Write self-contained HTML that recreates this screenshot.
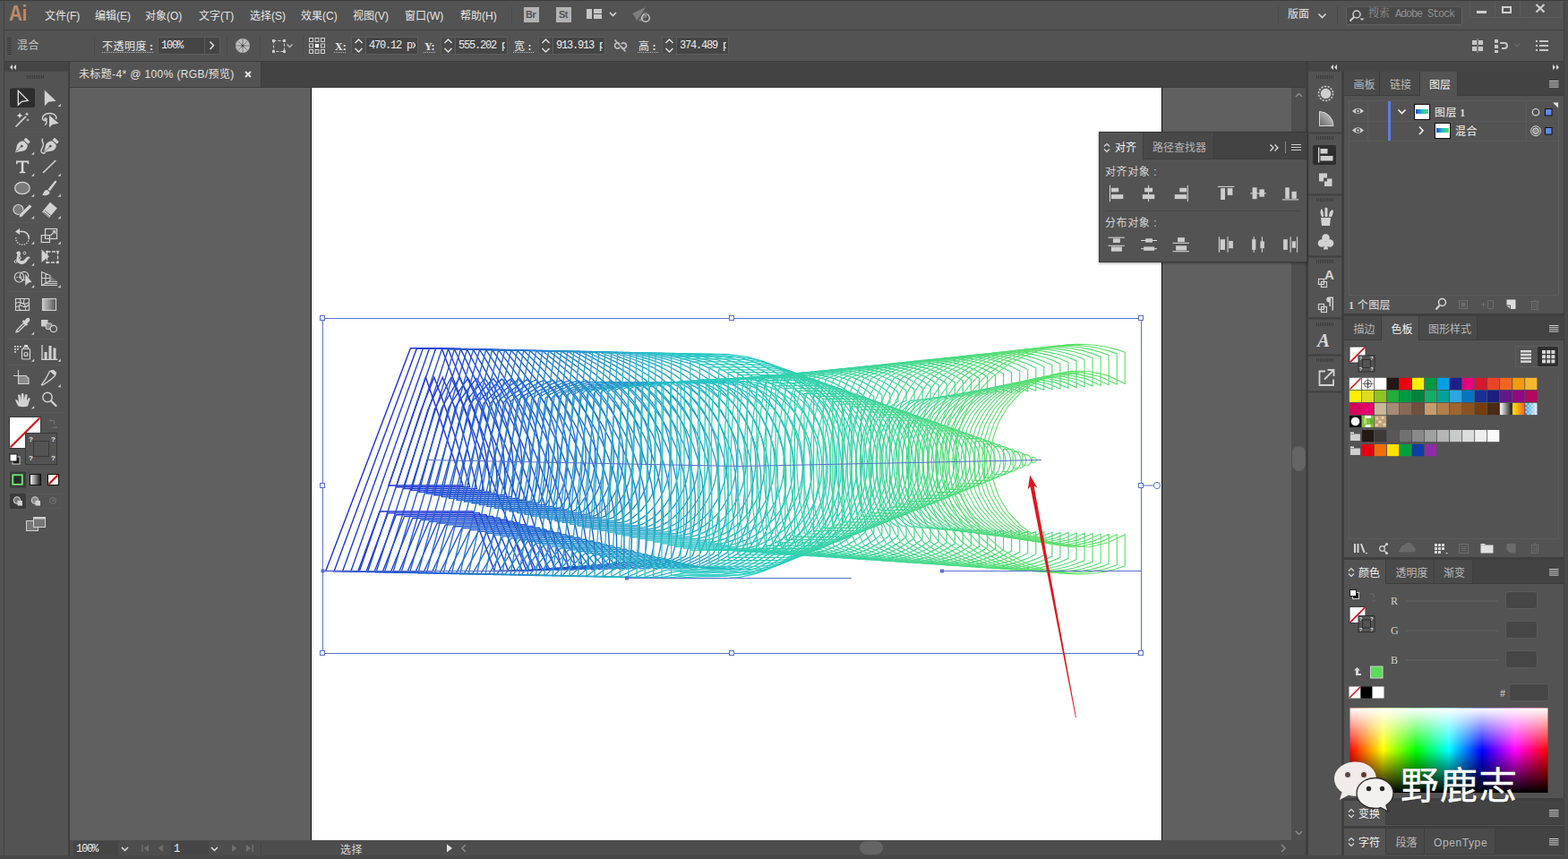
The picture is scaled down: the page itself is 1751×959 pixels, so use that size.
<!DOCTYPE html>
<html lang="zh-CN">
<head>
<meta charset="utf-8">
<title>未标题-4* @ 100% (RGB/预览)</title>
<style>
*{box-sizing:border-box;margin:0;padding:0}
html,body{width:1751px;height:959px;overflow:hidden;background:#535353}
body{position:relative;font-family:"Liberation Sans","Noto Sans CJK SC",sans-serif;font-size:12px;color:#dedede;line-height:1}
.a{position:absolute}
.t{position:absolute;white-space:nowrap;line-height:1}
.mono{font-family:"Liberation Mono","Noto Sans CJK SC",monospace}
.dim{color:#a9a9a9}
svg{position:absolute;overflow:visible}
#menubar{left:0;top:0;width:1751px;height:34px;background:#535353;border-top:1px solid #3d3d3d;border-bottom:1px solid #3f3f3f}
#ctrlbar{left:0;top:34px;width:1751px;height:35px;background:#535353;border-bottom:1px solid #3e3e3e}
#tabrow{left:78px;top:69px;width:1380px;height:29px;background:#434343;border-bottom:1px solid #3c3c3c}
#doctab{left:78px;top:69px;width:214px;height:28px;background:#535353;border-right:1px solid #3f3f3f}
#canvas{left:78px;top:98px;width:1364px;height:840px;background:#606060}
#artboard{left:347px;top:98px;width:951px;height:840px;background:#fff;border-left:1px solid #0c0c0c;border-right:1px solid #0c0c0c}
#vscroll{left:1442px;top:98px;width:16px;height:840px;background:#4f4f4f}
#status{left:78px;top:938px;width:1380px;height:17px;background:#4d4d4d}
#tools{left:0;top:69px;width:76px;height:890px;background:#535353}
#toolhead{left:5px;top:69px;width:71px;height:11px;background:#454545}
#tsep{left:76px;top:69px;width:2px;height:890px;background:#3f3f3f}
#ledge{left:0;top:1px;width:5px;height:958px;background:#525252;border-right:1px solid #414141}
#rsep{left:1458px;top:69px;width:3px;height:890px;background:#3f3f3f}
#rhead{left:1461px;top:69px;width:285px;height:11px;background:#454545}
#strip{left:1461px;top:80px;width:37px;height:879px;background:#535353}
#ssep{left:1498px;top:80px;width:3px;height:879px;background:#3f3f3f}
#rpan{left:1501px;top:80px;width:245px;height:879px;background:#535353}
#redge{left:1746px;top:1px;width:5px;height:958px;background:#4a4a4a;border-left:1px solid #3f3f3f}
#bedge{left:0;top:955px;width:1751px;height:4px;background:#484848}
.tabbar{position:absolute;left:1502px;width:244px;background:#434343}
.tab{position:absolute;top:0;height:100%;background:#4a4a4a;border-right:1px solid #3f3f3f;color:#b5b5b5;font-size:12px}
.tab.on{background:#535353;color:#f0f0f0}
</style>
</head>
<body>
<div class="a" id="menubar"></div>
<div class="a" id="ctrlbar"></div>
<div class="a" id="tabrow"></div>
<div class="a" id="doctab"></div>
<div class="a" id="canvas"></div>
<div class="a" id="artboard"></div>
<div class="a" id="vscroll"></div>
<div class="a" id="status"></div>
<div class="a" id="tools"></div>
<div class="a" id="toolhead"></div>
<div class="a" id="tsep"></div>
<div class="a" id="ledge"></div>
<div class="a" id="rsep"></div>
<div class="a" id="rhead"></div>
<div class="a" id="strip"></div>
<div class="a" id="ssep"></div>
<div class="a" id="rpan"></div>
<div class="a" id="redge"></div>
<div class="a" id="bedge"></div>
<!-- ===== menu bar ===== -->
<div class="t" style="left:10px;top:4px;font-size:23px;font-weight:bold;color:#c08a66;letter-spacing:-0.5px;transform:scaleX(.9);transform-origin:0 0">Ai</div>
<div class="t mi" style="left:50px">文件(F)</div>
<div class="t mi" style="left:106px">编辑(E)</div>
<div class="t mi" style="left:162px">对象(O)</div>
<div class="t mi" style="left:222px">文字(T)</div>
<div class="t mi" style="left:279px">选择(S)</div>
<div class="t mi" style="left:336px">效果(C)</div>
<div class="t mi" style="left:394px">视图(V)</div>
<div class="t mi" style="left:452px">窗口(W)</div>
<div class="t mi" style="left:514px">帮助(H)</div>
<div class="a" style="left:571px;top:7px;width:1px;height:20px;background:#4a4a4a"></div>
<div class="a" style="left:585px;top:8px;width:17px;height:17px;background:#b3b3b3"></div>
<div class="t" style="left:587px;top:11px;font-size:11px;font-weight:bold;color:#535353;letter-spacing:-0.5px">Br</div>
<div class="a" style="left:621px;top:8px;width:17px;height:17px;background:#b3b3b3"></div>
<div class="t" style="left:624px;top:11px;font-size:11px;font-weight:bold;color:#535353;letter-spacing:-0.5px">St</div>
<svg style="left:655px;top:9px" width="36" height="14"><rect x="0" y="1" width="6" height="11" fill="#c6c6c6"/><rect x="8" y="1" width="9" height="5" fill="#c6c6c6"/><rect x="8" y="7" width="9" height="5" fill="#c6c6c6"/><path d="M26 5l3.5 3.5L33 5" fill="none" stroke="#d6d6d6" stroke-width="1.6"/></svg>
<svg style="left:704px;top:6px" width="26" height="22"><path d="M2 9L17 2l-4 7l-6 8l-2-4zM9 17l7-10l3 1l-6 10z" fill="#7d7d7d"/><circle cx="17" cy="14" r="4.3" fill="none" stroke="#c4c4c4" stroke-width="1.5"/><rect x="16.2" y="7.5" width="1.8" height="6.5" fill="#c4c4c4" stroke="#535353" stroke-width=".8"/></svg>
<div class="a" style="left:1427px;top:7px;width:1px;height:20px;background:#4a4a4a"></div>
<div class="t" style="left:1438px;top:10px;font-size:12px;color:#e4e4e4">版面</div>
<svg style="left:1471px;top:13px" width="12" height="10"><path d="M1.5 2.5L5.5 6.5L9.5 2.5" fill="none" stroke="#d6d6d6" stroke-width="1.6"/></svg>
<div class="a" style="left:1493px;top:7px;width:1px;height:20px;background:#4a4a4a"></div>
<div class="a" style="left:1503px;top:7px;width:130px;height:21px;background:#494949;border:1px solid #606060;border-radius:2px"></div>
<svg style="left:1506px;top:10px" width="18" height="16"><circle cx="9" cy="6" r="4" fill="none" stroke="#cfcfcf" stroke-width="1.5"/><path d="M6 9L1.5 13.5" stroke="#cfcfcf" stroke-width="2"/><path d="M12.5 10.5h5l-2.5 2.5z" fill="#cfcfcf"/></svg>
<div class="t" style="left:1528px;top:10px;font-size:12px;color:#8f8f8f;font-family:'Liberation Mono','Noto Serif CJK SC',monospace;letter-spacing:-1.2px"><span style="letter-spacing:0">搜索</span> Adobe Stock</div>
<div class="a" style="left:1641px;top:1px;width:103px;height:19px;border:1px solid #5c5c5c;border-top:0;border-radius:0 0 3px 3px"></div>
<div class="a" style="left:1669px;top:1px;width:1px;height:18px;background:#5c5c5c"></div>
<div class="a" style="left:1697px;top:1px;width:1px;height:18px;background:#5c5c5c"></div>
<div class="a" style="left:1649px;top:12px;width:11px;height:3px;background:#cfcfcf"></div>
<div class="a" style="left:1677px;top:7px;width:11px;height:8px;border:2px solid #cfcfcf"></div>
<svg style="left:1714px;top:4px" width="12" height="11"><path d="M1.5 1l9 8.5M10.5 1l-9 8.5" stroke="#cfcfcf" stroke-width="2.2" fill="none"/></svg>
<style>.mi{top:12px;font-size:12px;color:#e6e6e6}</style>
<!-- ===== control bar ===== -->
<div class="a" style="left:8px;top:42px;width:5px;height:19px;background:repeating-linear-gradient(180deg,#3c3c3c 0 1px,#535353 1px 2px)"></div>
<div class="t" style="left:19px;top:45px;font-size:12px;color:#c4c4c4;letter-spacing:.5px">混合</div>
<div class="a" style="left:105px;top:40px;width:1px;height:23px;background:#4b4b4b"></div>
<div class="t ser" style="left:114px;top:45px"><b>不透明度</b> :</div>
<div class="a" style="left:114px;top:58px;width:58px;height:1px;background:repeating-linear-gradient(90deg,#b9b9b9 0 1px,transparent 1px 2px)"></div>
<div class="a fld" style="left:176px;top:41px;width:70px"></div>
<div class="t num" style="left:180px;top:45px">100%</div>
<div class="a" style="left:228px;top:42px;width:1px;height:18px;background:#5a5a5a"></div>
<svg style="left:232px;top:45px" width="10" height="12"><path d="M2.5 1.5L6.5 5.8L2.5 10" fill="none" stroke="#e0e0e0" stroke-width="1.5"/></svg>
<div class="a" style="left:253px;top:40px;width:1px;height:23px;background:#4b4b4b"></div>
<svg style="left:262px;top:42px" width="18" height="18"><circle cx="9" cy="9" r="8" fill="#bdbdbd"/><g stroke="#7f7f7f" stroke-width="1"><path d="M9 1v16M1 9h16M3.3 3.3l11.4 11.4M14.7 3.3L3.3 14.7"/></g><circle cx="9" cy="9" r="1.6" fill="#4a4a4a"/></svg>
<div class="a" style="left:290px;top:40px;width:1px;height:23px;background:#4b4b4b"></div>
<svg style="left:302px;top:42px" width="30" height="18"><rect x="3.5" y="3.5" width="12" height="12" fill="none" stroke="#c9c9c9" stroke-width="1.2" stroke-dasharray="3 2"/><g fill="#c9c9c9"><rect x="2" y="2" width="3" height="3"/><rect x="14" y="2" width="3" height="3"/><rect x="2" y="14" width="3" height="3"/><rect x="14" y="14" width="3" height="3"/></g><path d="M18.500 7.500l3 3l3-3" fill="none" stroke="#bdbdbd" stroke-width="1.300"/></svg>
<div class="a" style="left:338px;top:40px;width:1px;height:23px;background:#4b4b4b"></div>
<svg style="left:344px;top:41px" width="20" height="20"><g fill="none" stroke="#d0d0d0" stroke-width="1"><rect x="1.5" y="1.5" width="4" height="4"/><rect x="8" y="1.5" width="4" height="4"/><rect x="14.5" y="1.5" width="4" height="4"/><rect x="1.5" y="8" width="4" height="4"/><rect x="14.5" y="8" width="4" height="4"/><rect x="1.5" y="14.5" width="4" height="4"/><rect x="8" y="14.5" width="4" height="4"/><rect x="14.5" y="14.5" width="4" height="4"/></g><rect x="8" y="8" width="4" height="4" fill="#fff"/></svg>
<div class="t ser" style="left:374px;top:45px">X:</div>
<div class="a dot" style="left:373px;width:13px"></div>
<div class="a spn" style="left:392px"></div>
<svg class="sp" style="left:395px"><use href="#spin"/></svg>
<div class="a fld" style="left:408px;width:59px"></div>
<div class="t num" style="left:412px;top:45px;width:52px;overflow:hidden">470.12 px</div>
<div class="t ser" style="left:474px;top:45px">Y:</div>
<div class="a dot" style="left:473px;width:13px"></div>
<div class="a spn" style="left:492px"></div>
<svg class="sp" style="left:495px"><use href="#spin"/></svg>
<div class="a fld" style="left:508px;width:59px"></div>
<div class="t num" style="left:512px;top:45px;width:52px;overflow:hidden">555.202 px</div>
<div class="t ser" style="left:574px;top:45px"><b>宽</b> :</div>
<div class="a dot" style="left:573px;width:23px"></div>
<div class="a spn" style="left:601px"></div>
<svg class="sp" style="left:604px"><use href="#spin"/></svg>
<div class="a fld" style="left:617px;width:59px"></div>
<div class="t num" style="left:621px;top:45px;width:52px;overflow:hidden">913.913 px</div>
<svg style="left:684px;top:42px" width="18" height="18"><g fill="none" stroke="#bdbdbd" stroke-width="1.8"><path d="M8 7C6 5 2.5 6 2.5 9S6 13 8 11"/><path d="M10 7c2-2 5.500-1 5.500 2S12 13 10 11"/><path d="M2.500 2.500l12 13"/></g></svg>
<div class="t ser" style="left:713px;top:45px"><b>高</b> :</div>
<div class="a dot" style="left:712px;width:23px"></div>
<div class="a spn" style="left:739px"></div>
<svg class="sp" style="left:742px"><use href="#spin"/></svg>
<div class="a fld" style="left:755px;width:59px"></div>
<div class="t num" style="left:759px;top:45px;width:52px;overflow:hidden">374.489 px</div>
<svg width="0" height="0"><defs><g id="spin"><path d="M1.500 6L5.500 2L9.500 6M1.500 12L5.500 16L9.500 12" fill="none" stroke="#e0e0e0" stroke-width="1.5"/></g></defs></svg>
<svg style="left:1643px;top:43px" width="16" height="16"><g fill="#c6c6c6"><rect x="1" y="2" width="5" height="5"/><rect x="8" y="2" width="5" height="5"/><rect x="1" y="9" width="5" height="5"/><rect x="8" y="9" width="5" height="5"/></g><path d="M7 0v16" stroke="#9a9a9a" stroke-width="1"/></svg>
<svg style="left:1668px;top:42px" width="34" height="18"><g fill="#c6c6c6"><rect x="1" y="2" width="4" height="4"/><rect x="1" y="8" width="4" height="4"/><rect x="1" y="14" width="4" height="3"/></g><path d="M7 6h5a3 3 0 0 1 0 6h-3" fill="none" stroke="#c6c6c6" stroke-width="2"/><path d="M23 7l3 3l3-3" fill="none" stroke="#6a6a6a" stroke-width="1.3"/></svg>
<svg style="left:1715px;top:44px" width="16" height="14"><g fill="#c6c6c6"><rect x="0" y="1" width="2" height="2"/><rect x="4" y="1" width="10" height="2"/><rect x="0" y="6" width="2" height="2"/><rect x="4" y="6" width="10" height="2"/><rect x="0" y="11" width="2" height="2"/><rect x="4" y="11" width="10" height="2"/></g></svg>
<style>
.ser{font-family:"Liberation Serif","Noto Sans CJK SC",serif;font-size:12px;color:#e6e6e6;font-weight:bold;margin-top:1px}.ser b{font-weight:400;letter-spacing:.5px}
.num{font-family:"Liberation Mono",monospace;font-size:12px;letter-spacing:-1.2px;color:#f0f0f0}
.fld{top:41px;height:20px;background:#454545;border:1px solid #5e5e5e}
.spn{top:41px;width:16px;height:20px;border:1px solid #5a5a5a;border-right:0;background:#4b4b4b}
.sp{top:42px;width:11px;height:18px}
.dot{top:58px;height:1px;background:repeating-linear-gradient(90deg,#b9b9b9 0 1px,transparent 1px 2px)}
</style>
<!-- ===== document tab ===== -->
<div class="t" style="left:88px;top:77px;font-size:12px;color:#e2e2e2;letter-spacing:.37px">未标题-4* @ 100% (RGB/预览)</div>
<svg style="left:273px;top:79px" width="8" height="8"><path d="M1 1l6 6M7 1L1 7" stroke="#e6e6e6" stroke-width="1.8"/></svg>
<!-- toolbar head -->
<svg style="left:10px;top:71px" width="10" height="8"><path d="M4 1L1 4l3 3zM8 1L5 4l3 3z" fill="#d8d8d8"/></svg>
<div class="a" style="left:30px;top:84px;width:20px;height:4px;background:repeating-linear-gradient(90deg,#3a3a3a 0 1px,#535353 1px 2px)"></div>
<!-- right head -->
<svg style="left:1485px;top:71px" width="10" height="8"><path d="M4 1L1 4l3 3zM8 1L5 4l3 3z" fill="#d8d8d8"/></svg>
<svg style="left:1732px;top:71px" width="10" height="8"><path d="M2 1l3 3l-3 3zM6 1l3 3l-3 3z" fill="#d8d8d8"/></svg>
<!-- ===== status bar ===== -->
<div class="a" style="left:82px;top:939px;width:50px;height:16px;background:#454545"></div>
<div class="t num" style="left:85px;top:942px;font-size:12px">100%</div>
<svg style="left:134px;top:943px" width="12" height="10"><path d="M2 3l3.500 3.500L9 3" fill="none" stroke="#e0e0e0" stroke-width="1.5"/></svg>
<svg style="left:156px;top:941px" width="30" height="12"><g fill="#6e6e6e"><rect x="2" y="2" width="1.500" height="8"/><path d="M10 2v8L4.500 6z"/><path d="M26 2v8l-5.500-4z"/></g></svg>
<div class="a" style="left:191px;top:939px;width:42px;height:16px;background:#454545"></div>
<div class="t num" style="left:194px;top:942px;font-size:12px">1</div>
<svg style="left:234px;top:943px" width="12" height="10"><path d="M2 3l3.500 3.500L9 3" fill="none" stroke="#e0e0e0" stroke-width="1.500"/></svg>
<svg style="left:256px;top:941px" width="30" height="12"><g fill="#6e6e6e"><path d="M3 2v8l5.500-4z"/><path d="M19 2v8l5.500-4z"/><rect x="25.500" y="2" width="1.500" height="8"/></g></svg>
<div class="a" style="left:291px;top:940px;width:1px;height:14px;background:#444"></div><div class="t" style="left:380px;top:943px;font-size:12px;color:#d6d6d6;letter-spacing:.5px">选择</div>
<svg style="left:497px;top:941px" width="10" height="12"><path d="M2 1.500v9L8 6z" fill="#e0e0e0"/></svg>
<svg style="left:513px;top:941px" width="10" height="12"><path d="M7 2L3 6l4 4" fill="none" stroke="#8a8a8a" stroke-width="1.500"/></svg>
<div class="a" style="left:960px;top:939px;width:26px;height:15px;border-radius:8px;background:#646464"></div>
<svg style="left:1428px;top:941px" width="10" height="12"><path d="M3 2l4 4l-4 4" fill="none" stroke="#8a8a8a" stroke-width="1.500"/></svg>
<!-- vertical scrollbar -->
<svg style="left:1445px;top:101px" width="12" height="10"><path d="M2 7l3.500-3.500L9 7" fill="none" stroke="#8a8a8a" stroke-width="1.500"/></svg>
<svg style="left:1445px;top:925px" width="12" height="10"><path d="M2 3l3.500 3.500L9 3" fill="none" stroke="#8a8a8a" stroke-width="1.500"/></svg>
<div class="a" style="left:1443px;top:498px;width:15px;height:28px;border-radius:8px;background:#646464"></div>
<!-- ===== tools panel ===== -->
<svg style="left:0;top:0" width="80" height="620" viewBox="0 0 80 620">
<defs>
<path id="ct" d="M0 3.200L3.200 0V3.200z" fill="#cfcfcf"/>
<linearGradient id="gtool" x1="0" x2="1" y1="0" y2="0"><stop offset="0" stop-color="#c9c9c9"/><stop offset="1" stop-color="#555"/></linearGradient>
<linearGradient id="gbw" x1="0" x2="1" y1="0" y2="0"><stop offset="0" stop-color="#fff"/><stop offset="1" stop-color="#111"/></linearGradient>
</defs>
<g fill="none" stroke="#5d5d5d" stroke-width="1" opacity=".55">
<path d="M8 147.500h64M8 248.500h64M8 325.500h64M8 378.500h64M8 407.500h64M8 460.500h64"/>
</g>
<!-- row1 -->
<rect x="11" y="98.500" width="28" height="21.500" rx="2" fill="#2d2d2d"/>
<path d="M20.300 101.400V117.300L24.400 113.300L31.300 112.300z" fill="none" stroke="#e8e8e8" stroke-width="1.300" stroke-linejoin="miter"/>
<path d="M49.800 100.800V118.300L54.200 113.800L62.600 112.700z" fill="#d2d2d2"/>
<use href="#ct" x="64.600" y="115.800"/>
<!-- row2 wand / lasso -->
<path d="M17.500 141.500L29 129.800" stroke="#d2d2d2" stroke-width="1.700"/>
<path d="M22 125.500l.9 2.600l2.600.9l-2.600.9l-.9 2.600l-.9-2.600l-2.600-.9l2.600-.9zM30 125l.6 1.700l1.700.6l-1.700.6l-.6 1.700l-.6-1.700l-1.700-.6l1.700-.6zM31 132l.5 1.400l1.400.5l-1.400.5l-.5 1.400l-.5-1.400l-1.400-.5l1.400-.5z" fill="#e0e0e0"/>
<path d="M62.500 133c1.500-3.500-2-6.500-7-6.500c-5 0-8.500 3-8 6c.4 2 2.500 2.500 4 1.500c1-.8.500-2.200-.8-2c-1.200.3-.8 2 .6 2.600c1.600 1 .8 3.500-1.300 5" fill="none" stroke="#d2d2d2" stroke-width="1.400"/>
<path d="M55 128.500V142.500L58.500 139L65.500 137.800z" fill="#d2d2d2"/>
<!-- row3 pen / curvature -->
<g id="pen" fill="#d2d2d2"><path d="M17 170.300L19.300 161.200Q22.500 156.800 26.800 157.700L30.600 161.400Q31.500 165.500 27 168.300zM17.600 169.600L23.500 163.800"/><path d="M26.500 156.200L29 153.700L33.700 158.300L31.500 160.700z"/><circle cx="24.200" cy="163.200" r="1.400" fill="#535353"/><path d="M17.400 169.900L23.400 164" stroke="#535353" stroke-width=".8"/></g>
<use href="#ct" x="35" y="169.500"/>
<use href="#pen" x="32" y="0"/>
<path d="M47.500 154.500c-1.500 2.500.5 4.500 1 6.500c.6 2.500-2.500 4.500-2.500 7.500c0 2.500 2.500 3 4.500 2" fill="none" stroke="#d2d2d2" stroke-width="1.400"/>
<!-- row4 T / line -->
<path d="M18 179.500h14.200v3.700h-1.300l-.6-2h-4v10.200l2 .5v1.300h-6.500v-1.300l2-.5v-10.200h-4l-.6 2H18z" fill="#d8d8d8"/>
<use href="#ct" x="35" y="193.500"/>
<path d="M48 193L62.300 179" stroke="#d2d2d2" stroke-width="1.600"/>
<use href="#ct" x="64.600" y="193.500"/>
<!-- row5 ellipse / brush -->
<ellipse cx="24.900" cy="210" rx="8.300" ry="6.600" fill="#7c7c7c" stroke="#d8d8d8" stroke-width="1.200"/>
<use href="#ct" x="35" y="216.500"/>
<path d="M53.500 211.500L61.500 201.800Q63.200 201.200 63.200 203L55.800 213.300z" fill="#d2d2d2"/>
<path d="M47 217.500q1.500-1 2-3q1.500-3 4-2.300l2.300 2q.5 2.300-2.300 3.500q-3 1-6-.2z" fill="#d2d2d2"/>
<use href="#ct" x="64.600" y="216.500"/>
<!-- row6 shaper / eraser -->
<circle cx="20.500" cy="234" r="5.500" fill="#7c7c7c" stroke="#d8d8d8" stroke-width="1.200"/>
<path d="M21.500 239.500L33 228l2.700 2.700L24.200 242.200L21.300 242.700z" fill="#d2d2d2" stroke="#535353" stroke-width=".6"/>
<use href="#ct" x="35" y="241"/>
<path d="M47 236.500L56 225.800L63.800 232.500L54.800 243.200z" fill="#d2d2d2"/>
<path d="M48.500 236.800L55.300 242.400M50 235L56.800 240.600" stroke="#535353" stroke-width=".9"/>
<use href="#ct" x="64.600" y="241"/>
<!-- row7 rotate / scale -->
<path d="M19.500 258.500H25a7.300 7.300 0 0 1 7.300 7.300" fill="none" stroke="#d2d2d2" stroke-width="1.500"/>
<path d="M32.300 265.800a7.300 7.300 0 1 1-14.500-1" fill="none" stroke="#d2d2d2" stroke-width="1.500" stroke-dasharray="1.300 1.500"/>
<path d="M17 258.500L22 255v7z" fill="#d2d2d2"/>
<use href="#ct" x="35" y="269.500"/>
<g fill="none" stroke="#d2d2d2" stroke-width="1.200"><rect x="50.500" y="255.500" width="13" height="11"/><rect x="46.200" y="262.700" width="9.300" height="7.800"/><path d="M56.500 263l5-5M58.500 257.800h3.200v3.200"/></g>
<use href="#ct" x="64.600" y="269.500"/>
<!-- row8 warp / free transform -->
<path d="M18 282.500c2-3 5-2.500 5 .5c0 2.500-2.500 4.500-1 7c1.500 2.500 5 1 6.500-1.500c1.500-2.500 4.500-3 5.500 0c-1.500-.5-2.500.5-3.500 2.500c-1.500 3-5 5-8.500 3.500c-3.500-1.500-4.500-5-3-8c.6-1.300.5-3-1-4z" fill="#d2d2d2"/>
<g fill="#535353" stroke="#d2d2d2" stroke-width="1"><circle cx="17.500" cy="292" r="1.400"/><circle cx="22" cy="288" r="1.400"/><circle cx="27.500" cy="282.500" r="1.400"/></g>
<use href="#ct" x="35" y="293.500"/>
<path d="M46.500 278.500V293L50.500 289.500L55 286.500z" fill="#d2d2d2"/>
<rect x="52.500" y="281" width="12" height="12" fill="none" stroke="#d2d2d2" stroke-width="1.300" stroke-dasharray="4 1.500"/>
<g fill="#d2d2d2"><rect x="51.300" y="279.800" width="2.400" height="2.400"/><rect x="63.300" y="279.800" width="2.400" height="2.400"/><rect x="51.300" y="291.800" width="2.400" height="2.400"/><rect x="63.300" y="291.800" width="2.400" height="2.400"/></g>
<!-- row9 shape builder / perspective -->
<g fill="none" stroke="#d2d2d2" stroke-width="1.200"><ellipse cx="21.500" cy="309.500" rx="5.200" ry="5.500"/><circle cx="27" cy="308" r="4.700"/></g>
<path d="M18.500 309.500h6" stroke="#d2d2d2" stroke-width="1.300" stroke-dasharray="1.200 1.200"/>
<path d="M28 305.500V319.500L31.500 316L35.800 315z" fill="#d2d2d2" stroke="#535353" stroke-width=".5"/>
<use href="#ct" x="35" y="318"/>
<g fill="none" stroke="#d2d2d2" stroke-width="1.100"><path d="M46.500 303.500V318.500L56 313.500V307.500zM51 305.200V316.200M46.500 310.500H56M46.500 318.500H64M50 316.500H64M54 314.500H64"/></g>
<path d="M56 307.500L64 314.500H56z" fill="#8a8a8a" opacity=".6"/>
<use href="#ct" x="64.600" y="318"/>
<!-- row10 mesh / gradient -->
<g fill="none" stroke="#d2d2d2" stroke-width="1.100"><rect x="17.500" y="333.500" width="15" height="13"/><path d="M17.500 338.500q4-2 7 0t8-1M17.500 343q5-3 8-1t7-2M22 333.500q2 4 0 7t1 6M27.500 333.500q-2 4 0 7t1 6"/></g>
<rect x="47.500" y="333.500" width="15" height="13" fill="url(#gtool)" stroke="#d2d2d2" stroke-width="1.100"/>
<!-- row11 eyedropper / blend -->
<path d="M17 371.500l1-3l9-9.500l3 3l-9.500 9zM27.500 358l2-2.500q2-1.500 3.500.3q1 1.700-.5 3.200l-2.300 2.300l1 1l-1.500 1.500l-5-5l1.500-1.500z" fill="#d2d2d2"/>
<path d="M19.700 369.300l7.300-7.300" stroke="#535353" stroke-width="1.200"/>
<use href="#ct" x="35" y="370.500"/>
<rect x="46" y="357" width="7.500" height="7.500" fill="#cfcfcf"/>
<rect x="51.300" y="361" width="6.500" height="6.500" rx="1.500" fill="#8a8a8a" stroke="#d2d2d2" stroke-width="1"/>
<circle cx="59.800" cy="367" r="3.700" fill="#535353" stroke="#d2d2d2" stroke-width="1.200"/>
<!-- row12 symbol sprayer / graph -->
<g fill="#d2d2d2"><rect x="16" y="386" width="1.800" height="1.800"/><rect x="19" y="386" width="1.800" height="1.800"/><rect x="22" y="386" width="1.800" height="1.800"/><rect x="16" y="389" width="1.800" height="1.800"/><rect x="19" y="389" width="1.800" height="1.800"/><rect x="16" y="392" width="1.800" height="1.800"/><rect x="27" y="385" width="4" height="2.500"/></g>
<rect x="24.500" y="389.500" width="9" height="11.500" rx="1" fill="none" stroke="#d2d2d2" stroke-width="1.200"/>
<path d="M26.500 389.500v-2h5v2" fill="none" stroke="#d2d2d2" stroke-width="1.100"/>
<circle cx="29" cy="395.500" r="2" fill="none" stroke="#d2d2d2" stroke-width="1.200"/>
<use href="#ct" x="35" y="400.500"/>
<g fill="#d2d2d2"><rect x="46.300" y="385" width="1.300" height="17"/><rect x="46.300" y="400.700" width="18" height="1.300"/><rect x="49.500" y="393" width="3" height="8"/><rect x="54.500" y="386" width="3" height="15"/><rect x="59.500" y="388.500" width="3" height="12.500"/></g>
<use href="#ct" x="64.600" y="400.500"/>
<!-- row13 artboard / slice -->
<path d="M15 419.500H22M20.500 413V420" stroke="#d2d2d2" stroke-width="1.100" fill="none"/>
<path d="M20.500 419.500H29L32 422.500V428.500H20.500z" fill="#8a8a8a" stroke="#d2d2d2" stroke-width="1.100"/>
<path d="M46.500 429.500q5-6 9-15l4-1l3 2.500l-1 3.500q-5 5-14 10.500z" fill="none" stroke="#d2d2d2" stroke-width="1.300"/>
<path d="M55.500 414.500l3.500-1.500l3.500 3l-1 3.500z" fill="#d2d2d2"/>
<use href="#ct" x="64.600" y="429"/>
<!-- row14 hand / zoom -->
<path d="M20.500 453.500q-2.500-4-3.500-7q1.500-1 3 1l1 1.500l-1-8q1.500-1.200 2.500 0l1 5.500l.3-7q1.500-1 2.600 0l.4 7l1.300-6q1.500-.8 2.400.3l-.6 7l1.800-3.500q1.500-.5 2 .7q-1.500 4-2.700 8.500q-5 1.500-10.500 0z" fill="#d2d2d2"/>
<use href="#ct" x="35" y="453"/>
<circle cx="53" cy="443.500" r="5.200" fill="none" stroke="#d2d2d2" stroke-width="1.400"/>
<path d="M57 447.500L62.500 453" stroke="#d2d2d2" stroke-width="2.200" stroke-linecap="round"/>
<!-- fill / stroke -->
<rect x="10.500" y="465.500" width="35" height="35" fill="#fff" stroke="#383838" stroke-width="1"/>
<path d="M11.500 499.500L44.500 466.500" stroke="#d51a24" stroke-width="2.300"/>
<rect x="28.500" y="483.500" width="35" height="35" fill="#535353" stroke="#383838" stroke-width="1"/>
<rect x="37.500" y="492.500" width="17" height="17" fill="#535353" stroke="#383838" stroke-width="1"/>
<g fill="none" stroke="#6f6f6f" stroke-width="1.200"><path d="M56 469.500h4.500v4.500M58 477.500h4.500"/><path d="M54.500 469.500l2.500-2v4zM62.500 475.500l-2 2.500h4z" fill="#6f6f6f" stroke="none"/></g>
<rect x="14" y="510" width="8" height="8" fill="#1a1a1a" stroke="#d2d2d2" stroke-width="1"/>
<rect x="11" y="507" width="8" height="8" fill="#fff" stroke="#1a1a1a" stroke-width="1"/>
<!-- colour / gradient / none -->
<rect x="11" y="526.500" width="18" height="18" rx="1.500" fill="#3a3a3a"/>
<rect x="14.300" y="530.300" width="10.500" height="10.500" fill="#2a2a2a" stroke="#6ce56c" stroke-width="1.900"/>
<rect x="33.500" y="529.500" width="12" height="12" fill="url(#gbw)" stroke="#111" stroke-width="1"/>
<rect x="53.500" y="529.500" width="12" height="12" fill="#fff" stroke="#111" stroke-width="1"/>
<path d="M54.500 540.500L64.500 530.500" stroke="#e01218" stroke-width="2.400"/>
<!-- draw modes -->
<rect x="11" y="551" width="18" height="17" rx="1.500" fill="#3a3a3a"/>
<rect x="29.500" y="551.500" width="38" height="16" fill="none" stroke="#5c5c5c" stroke-width="1" opacity=".6"/>
<circle cx="19" cy="558.500" r="3.700" fill="#7a7a7a" stroke="#d2d2d2" stroke-width="1.100"/><rect x="19.500" y="559" width="5.500" height="5.500" fill="#d2d2d2"/>
<circle cx="39" cy="558.500" r="3.700" fill="#8a8a8a" stroke="#d2d2d2" stroke-width="1.100"/><rect x="39.500" y="559" width="5.500" height="5.500" fill="#d2d2d2"/>
<circle cx="59" cy="559" r="3.300" fill="none" stroke="#6b6b6b" stroke-width="1.500"/><circle cx="59.500" cy="558.500" r="1.500" fill="#6b6b6b"/>
<!-- screen mode -->
<rect x="29.500" y="581.500" width="13" height="11" fill="#777" stroke="#d2d2d2" stroke-width="1"/>
<rect x="37.500" y="577.500" width="13" height="11" fill="#777" stroke="#d2d2d2" stroke-width="1"/>
<rect x="37.500" y="577.500" width="13" height="2" fill="#d2d2d2"/>
</svg>
<div class="t q" style="left:32px;top:487px">?</div>
<div class="t q" style="left:57px;top:487px">?</div>
<div class="t q" style="left:32px;top:508px">?</div>
<div class="t q" style="left:57px;top:508px">?</div>
<style>.q{font-size:8px;font-weight:bold;color:#e8e8e8}</style>
<!-- ===== artwork ===== -->
<svg style="left:0;top:0" width="1751" height="959" viewBox="0 0 1751 959"><g fill="none" stroke-width="1.25" stroke-linejoin="miter">
<path stroke="#2232d6" stroke-width="1.42" d="M363.7 637.5l94.7-248.7 34.8 0 94.8 248.7-36 0-24-66.5-104 0-24 66.5-30.2 0zM434 542l41.3-121 41.7 121-71.1 0z"/>
<path stroke="#2237d5" stroke-width="1.42" d="M373.1 637.7l92.3-248.7 34.8 0 25.1 60.8 12.5 30.8 12.2 31.1 11.9 31.3 11.6 31.3 11.3 31.3 10.9 31.2-35.9 .6-24.4-64.6-102.2 .1-24.1 64.8-30 0zM442.4 543.8l27.5-85.1 14.9-37.5 7.7 20.3 7.3 20.6 6.9 20.7 7.9 25.8 10.1 35.2-70.5 0z"/>
<path stroke="#223cd5" stroke-width="1.41" d="M382.5 637.9l89.9-248.8 34.8 0 19.9 44.5 6.7 15 6.5 15.3 6.5 15.3 6.4 15.5 6.2 15.6 6.1 15.7 5.9 15.8 5.8 15.8 5.5 15.8 5.5 15.7 5.2 15.8 5.1 15.6 5 15.6-35.9 1.2-24.7-62.6-100.5 0-24.2 63.2-29.8 0zM450.9 545.6l26.8-87.7 2.2-5.4 14.4-31 4.3 10 4.1 10.3 4 10.4 3.7 10.6 3.5 10.7 3.3 10.7 3 10.6 4.1 15.8 8.2 35-69.9 0z"/>
<path stroke="#2240d4" stroke-width="1.41" d="M391.8 638.1l87.6-248.8 34.8 0 21 43.3 7 14.9 6.9 15 6.7 15.3 6.6 15.5 6.4 15.6 6.1 15.8 6 15.8 5.6 16 5.5 15.9 5.1 15.9 4.9 15.8 4.7 15.7 4.5 15.6-21.5 1.1-14.4 .7-25-60.7-98.8 .1-24.1 61.5-29.6 0zM459.4 547.4l26-90.3 2.5-5.3 13.2-25.3 2.6-4.8 4.7 10 4.5 10.4 4.2 10.6 3.9 10.9 3.6 10.9 3.1 11 2.8 10.9 2.4 10.8 2.2 10.6 5.1 29.6-69.3 0z"/>
<path stroke="#2245d4" stroke-width="1.40" d="M401.2 638.3l85.3-248.9 34.7 0 14.7 28.1 7.4 14.2 7.3 14.6 7.2 14.9 7 15.2 6.8 15.4 6.6 15.7 6.2 15.8 5.9 16 5.6 16 5.3 16.1 4.9 16 4.6 15.9 4.2 15.8 4 15.5-21.4 1.6-14.4 .8-25.3-58.7-97.1 .2-24.2 59.8-29.4 0zM467.8 549.2l25.3-93 2.7-5.2 11.6-19.6 5.8-9.5 2.6 5 2.5 5 2.5 5.2 2.4 5.3 2.2 5.4 2.2 5.4 2.1 5.6 1.9 5.5 1.9 5.6 1.7 5.7 1.6 5.6 1.4 5.6 1.4 5.7 1.2 5.5 1.1 5.6 1.9 10.9 1.5 10.5 2.6 24.2-68.7 0z"/>
<path stroke="#2349d3" stroke-width="1.40" d="M410.6 638.5l82.9-248.9 34.7 0 15.5 27.3 7.7 13.9 7.7 14.3 7.5 14.8 7.3 15.1 7 15.4 6.7 15.7 6.3 15.9 5.9 16.1 5.5 16.1 5.1 16.2 4.6 16.1 4.3 16 3.8 15.9 3.5 15.5-14.1 1.4-14.4 1.1-7.2 .5-25.7-56.7-95.3 .1-24.3 58.2-29.2 0zM476.2 551l24.7-95.6 2.8-5.2 12.7-19 6.3-9.1 2.8 5 2.7 5.1 2.7 5.2 2.5 5.3 2.4 5.5 2.3 5.5 2.1 5.7 2 5.7 1.9 5.7 1.7 5.8 1.6 5.8 1.3 5.8 1.3 5.7 1.1 5.8 .9 5.6 .8 5.6 .7 5.5 1 10.7 .6 10.1 .5 13.8-68 0z"/>
<path stroke="#234dd3" stroke-width="1.39" d="M420 638.7l80.5-249 34.7 0 8.1 13.2 8.1 13.4 8.1 13.6 8 14.1 7.8 14.5 7.6 15 7.2 15.4 6.8 15.8 6.5 16 5.9 16.1 5.4 16.3 4.9 16.3 4.4 16.3 3.9 16.1 3.4 15.8 3.1 15.6-14.2 1.6-14.3 1.4-7.2 .6-26.1-54.8-93.5 .2-24.3 56.5-29 0zM484.7 552.8l23.9-98.2 3.1-5.1 13.6-18.5 3.5-4.4 3.4-4.2 3 4.9 2.9 5.1 2.8 5.2 2.7 5.4 2.6 5.6 2.4 5.6 2.2 5.8 2.1 5.8 1.8 5.9 1.7 5.9 1.5 6 1.4 5.9 1.1 5.9 1 5.9 .8 5.8 .6 5.7 .4 5.6 .3 5.4 .2 5.3 .1 10.2-.4 13.5-67.5 0z"/>
<path stroke="#2351d2" stroke-width="1.39" d="M429.4 638.9l78.1-249 34.7 0 8.5 12.8 8.4 12.9 8.5 13.3 8.3 13.9 8.2 14.4 7.8 14.9 7.4 15.4 7 15.7 6.5 16.1 6 16.3 5.3 16.4 4.7 16.4 4.2 16.4 3.5 16.2 3.1 15.9 2.5 15.6-14.1 1.9-14.3 1.6-7.2 .7-26.4-52.9-91.9 .2-24.3 54.9-28.8 0zM493.1 554.6l23.3-100.8 3.2-5 14.7-17.9 3.7-4.3 3.6-4 3.3 4.9 3.1 5.1 3 5.3 2.8 5.4 2.7 5.7 2.5 5.7 2.3 5.9 2.2 6 1.9 6 1.7 6.1 1.4 6.1 1.3 6 1 6.1 .9 6 .6 5.9 .4 5.8 .3 5.7 0 5.5 0 5.4-.2 5.2-.4 4.9-.8 9.3-.5 4-66.8 0z"/>
<path stroke="#2355d2" stroke-width="1.39" d="M438.8 639.1l75.7-249.1 34.7 0 8.8 12.5 8.8 12.5 8.9 13 8.7 13.6 8.4 14.3 8.1 14.8 7.7 15.3 7.1 15.8 6.6 16.2 5.9 16.4 5.3 16.5 4.5 16.6 3.9 16.4 3.3 16.3 2.6 16 2 15.6-14 2.2-14.3 1.8-7.3 .8-26.7-50.9-90.1 .2-24.4 53.2-28.5 0zM501.6 556.4l22.5-103.4 3.4-5 15.7-17.3 4-4.1 3.9-3.8 3.5 4.9 3.3 5.1 3.2 5.3 3 5.6 2.8 5.7 2.6 5.8 2.4 6 2.2 6.1 1.9 6.2 1.7 6.2 1.4 6.3 1.2 6.2 .9 6.2 .8 6.1 .4 6 .3 6 0 5.7-.2 5.6-.3 5.4-.5 5.2-.6 5-.7 4.7-.8 4.4-.8 3.9-66.2 0z"/>
<path stroke="#2359d1" stroke-width="1.38" d="M448.1 639.3l73.4-249.1 34.7 0 9.2 12 9.1 12.2 9.2 12.7 9.1 13.3 8.8 14.1 8.3 14.8 7.9 15.3 7.3 15.8 6.7 16.2 5.9 16.5 5.2 16.7 4.4 16.7 3.6 16.6 2.9 16.3 2.2 16.1 1.5 15.6-6.9 1.2-7 1.2-7.2 1.1-7.1 1-7.3 .9-27.1-49-39.2 .3-49.1 0-24.5 51.5-28.3 0zM510.1 558.2l21.8-106 3.6-5 16.7-16.6 4.2-4 4.2-3.5 3.6 4.8 3.6 5.1 3.3 5.4 3.2 5.6 2.9 5.8 2.8 5.9 2.5 6.1 2.2 6.3 1.9 6.3 1.7 6.4 1.4 6.3 1.1 6.4 .9 6.4 .5 6.2 .4 6.2 0 6-.2 5.9-.4 5.6-.6 5.5-.7 5.2-.9 4.9-1.1 4.7-1 4.4-1.2 3.7-65.5 0z"/>
<path stroke="#235dd1" stroke-width="1.38" d="M457.5 639.5l71-249.1 34.6 0 9.7 11.6 9.5 11.8 9.5 12.3 9.4 13.2 9.1 13.9 8.7 14.7 8.1 15.3 7.4 15.8 6.7 16.3 6 16.6 5.1 16.8 4.2 16.8 3.4 16.7 2.5 16.5 1.8 16.1 1.1 15.5-7 1.5-7 1.3-7.1 1.2-7.1 1.1-7.3 .9-23.5-40.1-3.9-6.9-38.5 .3-48.1 0-24.6 49.9-28.1 0zM518.5 560l21.1-108.7 3.8-4.8 17.8-16.1 4.5-3.8 4.4-3.3 3.8 4.8 3.8 5.1 3.5 5.4 3.3 5.7 3.1 5.9 2.8 6 2.6 6.3 2.3 6.3 2 6.5 1.6 6.5 1.4 6.5 1 6.6 .8 6.4 .4 6.4 .2 6.3-.1 6.2-.4 5.9-.7 5.8-.8 5.5-1.1 5.2-1.2 4.9-1.3 4.6-1.4 4.3-1.5 3.6-64.9 0z"/>
<path stroke="#2361d1" stroke-width="1.37" d="M466.9 639.7l68.7-249.2 34.5 0 10 11.3 9.9 11.4 9.9 12 9.7 12.9 9.4 13.8 9 14.5 8.3 15.3 7.6 15.9 6.8 16.4 5.9 16.7 5 16.9 4.1 16.9 3.1 16.8 2.2 16.6 1.4 16.1 .6 15.6-6.9 1.6-7 1.4-7.1 1.4-7.2 1.2-7.2 1-23.8-38.4-4-6.6-37.7 .3-47.2 0-24.5 48.2-27.9 0zM527 561.8l20.4-111.3 4-4.7 14.3-12 4.4-3.6 4.8-3.6 4.7-3.1 4 4.8 3.9 5.1 3.8 5.5 3.4 5.7 3.3 5.9 2.9 6.2 2.7 6.4 2.3 6.5 2 6.6 1.7 6.6 1.3 6.7 1 6.7 .6 6.6 .3 6.5 0 6.5-.3 6.2-.6 6.1-.9 5.8-1.1 5.5-1.3 5.3-1.5 4.9-1.6 4.6-1.8 4.2-1.7 3.4-64.3 0z"/>
<path stroke="#2365d0" stroke-width="1.37" d="M476.3 639.9l66.3-249.2 34.5 0 10.4 10.8 10.2 11.1 10.3 11.7 10.1 12.6 9.7 13.6 9.2 14.5 8.5 15.3 7.8 15.9 6.9 16.4 5.9 16.8 4.9 17.1 3.9 17 2.9 17 1.9 16.6 .9 16.2 .1 15.6-6.8 1.7-7 1.6-7.1 1.4-7.2 1.3-7.2 1.2-20-30.4-8.1-12.7-27.7 .3-55.5 .1-24.6 46.5-27.7 0zM535.4 563.6l19.7-113.9 4.2-4.7 15.2-11.6 4.6-3.3 5-3.4 4.9-3 4.3 4.8 4.1 5.2 3.9 5.4 3.7 5.8 3.3 6 3.1 6.3 2.7 6.5 2.4 6.6 2 6.8 1.7 6.8 1.3 6.8 .9 6.8 .5 6.8 .2 6.7-.2 6.5-.5 6.4-.8 6.1-1.1 5.9-1.4 5.6-1.6 5.2-1.7 4.9-2 4.6-2 4.1-2.1 3.3-63.7 0z"/>
<path stroke="#2369d0" stroke-width="1.36" d="M485.7 640.1l63.9-249.3 34.5 0 10.8 10.5 10.5 10.7 10.7 11.4 10.4 12.4 10 13.4 9.5 14.4 8.8 15.2 7.9 16 7 16.5 5.9 16.9 4.8 17.2 3.7 17.2 2.6 17 1.6 16.8 .5 16.2-.3 15.6-6.9 1.8-7 1.8-7 1.5-7.2 1.4-7.2 1.3-20.3-29-8.2-12.2-27.1 .4-54.3 0-24.7 44.9-27.4 0zM543.9 565.4l19-116.5 4.3-4.7 16-11.1 4.8-3.2 5.3-3.2 5.2-2.7 4.5 4.7 4.3 5.2 4.1 5.5 3.8 5.8 3.5 6.1 3.2 6.4 2.8 6.6 2.4 6.8 2.1 6.8 1.6 7 1.3 7 .8 7 .4 6.9 .1 6.8-.3 6.6-.7 6.5-1 6.2-1.4 6-1.6 5.6-1.9 5.3-2.1 4.9-2.2 4.5-2.4 4.1-2.4 3.1-63 0z"/>
<path stroke="#246dcf" stroke-width="1.36" d="M495.1 640.3l61.5-249.3 34.5 0 11.1 10.1 10.9 10.3 11.1 11 10.7 12.2 10.4 13.3 9.7 14.3 9 15.2 8.1 15.9 7 16.6 6 17.1 4.7 17.2 3.6 17.4 2.3 17.2 1.2 16.8 .1 16.3-.8 15.6-6.8 2-7 1.8-7 1.7-7.2 1.5-7.3 1.4-16.3-21.9-12.5-17.4-26.5 .4-53.1 .1-24.7 43.2-27.3 0zM552.3 567.2l18.3-119.1 4.6-4.6 16.7-10.7 5.1-3 5.6-3.1 5.4-2.5 4.7 4.7 4.5 5.2 4.3 5.5 3.9 5.9 3.7 6.2 3.2 6.5 2.9 6.7 2.5 6.9 2.1 7 1.6 7.1 1.2 7.2 .8 7.1 .4 7.1-.1 6.9-.5 6.8-.9 6.6-1.2 6.3-1.6 6-1.9 5.7-2.1 5.3-2.4 4.9-2.6 4.4-2.6 4-2.8 3-62.4 0z"/>
<path stroke="#2470cf" stroke-width="1.36" d="M504.4 640.5l59.2-249.4 34.5 0 11.5 9.7 11.3 10 11.3 10.7 11.2 11.9 10.6 13.1 10.1 14.2 9.2 15.2 8.2 16 7.1 16.7 5.9 17.1 4.7 17.4 3.4 17.5 2.1 17.3 .8 16.9-.3 16.4-1.3 15.6-6.8 2.1-6.9 2-7.1 1.8-7.1 1.6-7.3 1.5-16.5-20.8-12.6-16.5-26 .4-52 0-24.7 41.6-27.1 0zM560.8 569l17.5-121.7 4.8-4.5 17.6-10.4 5.3-2.8 5.8-2.9 5.7-2.3 4.9 4.7 4.7 5.2 4.4 5.6 4.1 5.9 3.8 6.3 3.4 6.6 3 6.8 2.5 7.1 2.1 7.1 1.7 7.3 1.1 7.3 .7 7.2 .3 7.2-.2 7.1-.7 6.9-1 6.7-1.5 6.4-1.8 6.1-2.1 5.7-2.5 5.4-2.7 4.8-2.8 4.4-3 4-3 2.8-61.8 0z"/>
<path stroke="#2474ce" stroke-width="1.35" d="M513.8 640.7l56.8-249.4 34.5 0 11.8 9.3 11.7 9.6 11.7 10.4 11.5 11.7 11 12.9 10.3 14.1 9.4 15.2 8.4 16 7.2 16.8 5.9 17.2 4.6 17.5 3.2 17.6 1.8 17.4 .6 17-.8 16.4-1.8 15.7-6.7 2.2-6.9 2.1-7.1 1.9-7.1 1.8-7.3 1.5-12.5-14.5-12.7-15.4-4.3-5.4-25.4 .4-50.8 .1-24.8 39.9-26.8 0zM569.2 570.8l16.9-124.3 5-4.5 18.3-9.9 5.5-2.7 6.1-2.7 6-2 5.1 4.6 4.9 5.2 4.6 5.6 4.3 6 3.9 6.4 3.5 6.7 3 7 2.6 7.1 2.2 7.3 1.6 7.4 1.1 7.4 .7 7.5 .1 7.3-.3 7.2-.8 7.1-1.3 6.8-1.6 6.5-2.1 6.1-2.4 5.8-2.7 5.3-3 4.9-3.1 4.4-3.3 3.8-3.4 2.7-61.2 0z"/>
<path stroke="#2478ce" stroke-width="1.35" d="M523.2 640.9l54.5-249.5 34.4 0 12.2 9 12 9.2 12.1 10 11.8 11.5 11.3 12.8 10.6 14 9.6 15.1 8.6 16.1 7.2 16.8 6 17.4 4.5 17.6 3 17.7 1.6 17.6 .2 17.1-1.1 16.4-2.3 15.6-6.8 2.4-6.9 2.3-7 2-7.2 1.9-7.2 1.6-12.6-13.7-12.9-14.6-4.3-5.1-24.9 .5-49.6 .1-24.9 38.2-26.6 0zM577.6 572.6l16.2-127 5.2-4.4 19.1-9.4 5.8-2.5 6.3-2.6 6.2-1.8 5.4 4.7 5.1 5.1 4.8 5.7 4.4 6.1 4 6.4 3.6 6.8 3.2 7.1 2.6 7.3 2.2 7.4 1.6 7.5 1.1 7.6 .6 7.6 0 7.5-.4 7.3-1 7.2-1.4 6.9-1.9 6.6-2.3 6.2-2.7 5.8-3 5.4-3.2 4.9-3.5 4.3-3.6 3.7-3.7 2.6-60.6 0z"/>
<path stroke="#247ccd" stroke-width="1.34" d="M532.6 641.1l52.1-249.5 34.4 0 12.6 8.5 12.3 8.9 12.5 9.7 12.2 11.2 11.6 12.7 10.8 13.9 9.9 15.1 8.6 16.1 7.4 16.9 5.9 17.4 4.5 17.8 2.8 17.8 1.4 17.7-.2 17.2-1.5 16.5-2.8 15.6-6.7 2.6-6.9 2.3-7 2.2-7.2 2-7.2 1.7-12.8-12.8-8.6-9.1-8.8-9.5-16.2 .4-56.6 .1-24.9 36.6-26.3 0zM586.1 574.4l15.5-129.6 5.3-4.3 20-9.1 5.9-2.3 6.6-2.4 6.5-1.6 5.6 4.7 5.3 5.1 4.9 5.7 4.6 6.2 4.2 6.5 3.7 6.9 3.2 7.2 2.8 7.4 2.1 7.6 1.6 7.7 1.1 7.7 .5 7.7-.1 7.7-.5 7.5-1.2 7.2-1.6 7-2.1 6.7-2.5 6.3-2.9 5.9-3.3 5.4-3.6 4.8-3.7 4.3-4 3.7-4 2.4-59.9 0z"/>
<path stroke="#2480cd" stroke-width="1.34" d="M542 641.3l49.7-249.6 34.4 0 12.9 8.2 12.7 8.5 12.9 9.4 12.5 11 11.9 12.4 11.1 13.9 10.1 15 8.8 16.2 7.5 16.9 5.9 17.6 4.3 17.9 2.7 18 1.1 17.7-.5 17.3-1.9 16.6-3.3 15.6-6.7 2.7-6.8 2.5-7 2.3-7.2 2.1-7.3 1.8-8.5-7.9-8.7-8.3-8.8-8.7-4.5-4.6-15.7 .4-15.8 .2-39.5 0-24.9 34.9-26.2 0zM594.5 576.2l14.8-132.2 5.6-4.2 20.7-8.7 6.2-2.1 6.9-2.3 6.7-1.4 5.8 4.7 5.4 5.2 5.2 5.7 4.8 6.2 4.3 6.6 3.8 7 3.3 7.3 2.8 7.6 2.1 7.7 1.7 7.8 1 7.9 .4 7.9-.1 7.7-.8 7.7-1.2 7.4-1.8 7.1-2.3 6.8-2.8 6.3-3.2 6-3.6 5.4-3.8 4.8-4.1 4.2-4.2 3.6-4.3 2.3-59.4 0z"/>
<path stroke="#2483cc" stroke-width="1.33" d="M551.4 641.5l47.3-249.6 34.4 0 13.3 7.8 13.1 8.1 13.2 9 12.8 10.8 12.3 12.3 11.4 13.7 10.2 15.1 9 16.2 7.6 17 5.9 17.7 4.2 18 2.6 18.1 .8 17.9-.8 17.3-2.4 16.7-3.8 15.6-6.6 2.8-6.8 2.7-7 2.4-7.2 2.1-7.3 2-8.6-7.3-8.8-7.7-8.9-8.3-4.5-4.3-15.4 .5-15.4 .1-38.5 0-25 33.3-26 0zM603 578l14.1-134.8 5.7-4.2 21.5-8.2 6.5-2 7.1-2 7-1.2 5.9 4.6 5.7 5.2 5.4 5.7 4.9 6.3 4.4 6.7 4 7.1 3.4 7.4 2.8 7.7 2.2 7.9 1.6 8 1 8 .3 8-.2 7.9-.9 7.8-1.4 7.5-2 7.2-2.5 6.9-3 6.5-3.5 5.9-3.8 5.4-4.1 4.8-4.4 4.2-4.6 3.6-4.6 2.1-58.7 0z"/>
<path stroke="#2487cc" stroke-width="1.33" d="M560.7 641.7l45-249.6 34.4 0 13.7 7.3 13.4 7.8 13.6 8.7 13.2 10.5 12.5 12.2 11.7 13.6 10.5 15.1 9.1 16.1 7.6 17.2 6 17.7 4.1 18.2 2.4 18.2 .5 18-1.1 17.5-2.8 16.6-4.2 15.7-6.7 3-6.8 2.7-7 2.5-7.1 2.3-7.3 2.1-8.7-6.7-8.9-7.2-9-7.7-4.6-4-15 .4-15 .2-37.5 0-25.1 31.6-25.7 0zM611.5 579.8l13.3-137.4 6-4.2 22.3-7.8 6.6-1.8 7.4-1.8 7.2-1 6.2 4.6 5.9 5.2 5.5 5.8 5.1 6.3 4.6 6.8 4 7.2 3.5 7.5 2.9 7.9 2.2 8 1.6 8.1 1 8.2 .3 8.1-.4 8.1-1 7.9-1.6 7.7-2.1 7.3-2.8 7-3.2 6.5-3.7 6-4.1 5.4-4.5 4.8-4.7 4.2-4.8 3.4-5 2-58.1 0z"/>
<path stroke="#248bcc" stroke-width="1.33" d="M570.1 641.9l42.6-249.7 34.4 0 14 7 13.8 7.4 13.9 8.4 13.6 10.2 12.9 12 11.9 13.6 10.7 15 9.3 16.2 7.7 17.2 5.9 17.9 4.1 18.3 2.2 18.3 .3 18.1-1.5 17.6-3.2 16.7-4.7 15.7-6.6 3.1-6.8 2.9-7 2.6-7.1 2.4-7.3 2.1-8.8-6.1-9-6.6-9.1-7.1-4.7-3.8-14.6 .5-14.6 .2-36.5 0-25.1 29.9-25.6 0zM619.9 581.6l12.7-140 6.1-4.1 23.1-7.4 14.5-3.3 7.5-.8 6.4 4.6 6.1 5.2 5.7 5.8 5.2 6.4 4.8 6.9 4.1 7.3 3.6 7.7 2.9 7.9 2.2 8.2 1.6 8.2 .9 8.4 .3 8.3-.5 8.2-1.1 8-1.7 7.8-2.4 7.4-3 7.1-3.4 6.6-4 6-4.4 5.5-4.7 4.8-5 4.1-5.2 3.4-5.2 1.8-57.5 0z"/>
<path stroke="#248fcb" stroke-width="1.32" d="M579.5 642.1l40.2-249.7 34.4 0 14.4 6.6 14.1 6.9 14.3 8.2 13.9 10 13.2 11.8 12.2 13.5 11 15 9.4 16.2 7.8 17.3 5.9 18 4 18.4 2 18.4 .1 18.3-1.9 17.6-3.6 16.8-5.2 15.6-6.5 3.3-6.8 3-7 2.8-7.1 2.5-7.3 2.2-8.9-5.5-9.1-6-9.3-6.6-4.6-3.6-14.2 .5-14.3 .2-35.6 0-25.1 28.3-25.3 0zM628.4 583.4l11.9-142.7 6.3-3.9 23.9-7.1 15.1-2.9 7.7-.5 6.6 4.5 6.3 5.2 5.9 5.9 5.4 6.4 4.8 7 4.3 7.4 3.6 7.8 3 8.1 2.3 8.2 1.6 8.5 .8 8.5 .2 8.4-.6 8.4-1.2 8.1-1.9 7.9-2.6 7.6-3.1 7.1-3.7 6.7-4.3 6.1-4.6 5.4-5 4.8-5.3 4.1-5.5 3.3-5.6 1.7-56.9 0z"/>
<path stroke="#2592cb" stroke-width="1.32" d="M588.9 642.3l37.9-249.8 34.3 0 14.8 6.2 14.4 6.6 14.7 7.8 14.3 9.8 13.5 11.7 12.4 13.4 11.2 14.9 9.6 16.3 7.8 17.3 6 18.1 3.9 18.6 1.8 18.6-.2 18.3-2.1 17.7-4.1 16.9-5.6 15.6-6.6 3.4-6.7 3.2-7 2.9-7.2 2.6-7.3 2.3-8.9-4.9-9.2-5.5-4.7-3-4.7-3.1-4.7-3.2-13.8 .5-13.9 .2-34.6 0-25.2 26.6-25.1 0zM636.8 585.2l11.3-145.3 6.5-3.9 24.7-6.6 15.5-2.6 8-.3 6.8 4.5 6.5 5.2 6 5.9 5.6 6.5 5 7.1 4.4 7.5 3.7 7.9 3 8.2 2.3 8.4 1.6 8.6 .8 8.6 .1 8.6-.6 8.5-1.4 8.3-2.1 8.1-2.7 7.6-3.4 7.3-3.9 6.7-4.5 6.1-5 5.5-5.3 4.8-5.6 4-5.8 3.3-5.9 1.5-56.2 0z"/>
<path stroke="#2596ca" stroke-width="1.31" d="M598.3 642.5l35.5-249.8 34.3 0 15.1 5.8 14.9 6.2 15 7.5 14.6 9.5 13.8 11.5 12.8 13.3 11.3 15 9.8 16.3 7.9 17.4 5.9 18.2 3.9 18.6 1.6 18.8-.4 18.4-2.5 17.9-4.5 16.9-6.1 15.6-6.5 3.6-6.8 3.2-6.9 3.1-7.2 2.7-7.3 2.4-4.5-2.1-4.5-2.2-4.7-2.4-4.6-2.6-4.7-2.7-4.8-2.8-4.7-3-13.5 .5-13.4 .3-33.7 0-25.3 24.9-24.9 0zM645.2 587l10.6-147.9 6.7-3.9 25.5-6.1 16-2.3 8.3-.1 7 4.5 6.7 5.2 6.2 6 5.7 6.5 5.1 7.2 4.5 7.6 3.8 8 3.1 8.4 2.3 8.5 1.6 8.7 .8 8.8 0 8.8-.7 8.6-1.5 8.5-2.2 8.1-3 7.8-3.6 7.3-4.1 6.8-4.8 6.2-5.2 5.5-5.6 4.8-5.9 4-6.1 3.1-6.3 1.4-55.6 0z"/>
<path stroke="#259aca" stroke-width="1.31" d="M607.6 642.7l33.2-249.9 34.3 0 15.5 5.5 15.2 5.8 15.4 7.2 14.9 9.3 14.2 11.3 13 13.2 11.6 14.9 9.9 16.4 8 17.5 5.9 18.3 3.8 18.7 1.5 18.9-.7 18.6-2.9 17.9-4.8 16.9-6.7 15.7-6.5 3.7-6.7 3.4-6.9 3.1-7.2 2.9-7.3 2.5-4.5-1.8-4.6-2-4.7-2.1-4.7-2.2-4.8-2.5-4.8-2.5-4.8-2.8-13.1 .6-13 .2-32.8 0-25.3 23.3-24.6 0zM653.7 588.8l9.9-150.5 6.8-3.8 26.3-5.8 16.5-1.9 8.5 .1 7.3 4.5 6.9 5.3 6.4 5.9 5.8 6.7 5.3 7.2 4.6 7.7 3.9 8.1 3.1 8.5 2.4 8.7 1.5 8.9 .8 8.9 0 8.9-.9 8.8-1.6 8.6-2.4 8.3-3.1 7.8-3.8 7.5-4.5 6.8-4.9 6.3-5.5 5.5-5.9 4.7-6.3 4-6.4 3.1-6.5 1.2-55 0z"/>
<path stroke="#259dc9" stroke-width="1.31" d="M617 642.9l30.8-249.9 34.3 0 15.9 5 15.5 5.5 15.8 6.8 15.2 9.1 14.5 11.2 13.3 13.1 11.8 14.9 10.1 16.4 8.1 17.5 5.9 18.4 3.6 18.9 1.4 19-1 18.7-3.2 18-5.2 17-7.2 15.7-6.4 3.8-6.7 3.6-7 3.2-7.1 2.9-7.3 2.7-4.6-1.5-4.7-1.7-4.7-1.8-4.7-2-4.8-2.1-4.9-2.4-4.9-2.4-12.6 .5-12.7 .3-31.8 0-25.3 21.6-24.5 0zM662.1 590.6l9.2-153.1 7.1-3.7 27.1-5.4 17-1.6 8.7 .4 7.5 4.4 7 5.3 6.6 6 6.1 6.7 5.4 7.3 4.7 7.8 3.9 8.2 3.2 8.6 2.4 8.9 1.6 9 .7 9.1-.1 9.1-1 8.9-1.7 8.7-2.6 8.4-3.3 8-4 7.5-4.7 6.9-5.2 6.3-5.8 5.5-6.2 4.8-6.5 3.9-6.8 3-6.8 1.1-54.4 0z"/>
<path stroke="#25a1c9" stroke-width="1.30" d="M626.4 643.1l28.4-250 34.3 0 16.2 4.7 15.9 5.1 16.1 6.5 15.7 8.8 14.7 11 13.6 13.1 12 14.8 10.3 16.4 8.1 17.7 6 18.5 3.5 19 1.2 19.1-1.2 18.8-3.5 18.2-5.7 17-7.6 15.7-6.5 3.9-6.7 3.7-6.9 3.4-7.1 3-7.3 2.7-4.7-1.2-4.7-1.3-4.7-1.6-4.8-1.7-4.9-1.8-4.9-2.1-4.9-2.2-12.3 .6-12.3 .2-30.8 0-25.4 20-24.2 0zM670.6 592.4l8.4-155.7 7.3-3.7 27.9-4.9 17.5-1.2 9 .5 7.7 4.4 7.2 5.3 6.8 6 6.2 6.8 5.5 7.4 4.8 7.9 4.1 8.4 3.2 8.7 2.4 9 1.6 9.2 .7 9.2-.2 9.2-1.1 9.1-1.8 8.8-2.7 8.5-3.5 8.1-4.3 7.6-4.9 7-5.5 6.4-6 5.5-6.5 4.8-6.9 3.8-7 3-7.2 .9-53.7 0z"/>
<path stroke="#25a5c9" stroke-width="1.30" d="M635.8 643.3l26-250 34.3 0 16.6 4.3 16.2 4.7 16.5 6.2 16 8.6 15.1 10.8 13.8 13 12.3 14.8 10.4 16.4 8.2 17.7 5.9 18.7 3.5 19.1 1 19.2-1.5 19-3.8 18.2-6.1 17.1-8.1 15.7-6.4 4.1-6.7 3.8-6.9 3.5-7.1 3.1-7.4 2.8-4.6-.9-4.8-1.1-4.8-1.2-4.8-1.4-4.9-1.6-5-1.8-5-2-11.9 .6-11.9 .3-29.8 0-25.5 18.3-24 0zM679 594.2l7.8-158.3 7.5-3.7 28.6-4.5 18-.8 9.3 .7 7.9 4.4 7.4 5.3 7 6.1 6.3 6.8 5.7 7.5 4.9 8 4.1 8.5 3.3 8.8 2.5 9.2 1.5 9.3 .7 9.4-.3 9.3-1.1 9.2-2 9-2.9 8.7-3.7 8.2-4.4 7.7-5.2 7.1-5.7 6.3-6.4 5.6-6.8 4.7-7.1 3.8-7.4 2.9-7.5 .8-53.1 0z"/>
<path stroke="#25a8c8" stroke-width="1.29" d="M645.2 643.5l23.7-250.1 34.1 0 17 3.9 16.7 4.4 16.8 5.9 16.3 8.3 15.4 10.7 14.2 12.8 12.4 14.8 10.5 16.5 8.4 17.8 5.9 18.7 3.4 19.3 .8 19.4-1.7 19-4.2 18.3-6.5 17.2-8.6 15.6-6.4 4.3-6.6 3.9-6.9 3.6-7.1 3.3-7.4 2.9-4.7-.6-4.8-.8-4.8-1-4.9-1.1-5-1.3-5-1.5-5-1.7-11.6 .6-11.5 .3-28.9 0-25.4 16.6-23.9 0zM687.5 596l7-161 7.7-3.5 29.5-4.1 18.4-.5 9.5 1 8.1 4.3 7.7 5.3 7.1 6.1 6.5 6.9 5.9 7.5 5 8.2 4.2 8.6 3.4 9 2.4 9.3 1.5 9.4 .7 9.6-.4 9.5-1.2 9.3-2.2 9.1-3 8.8-3.8 8.3-4.7 7.8-5.4 7.2-6 6.4-6.6 5.6-7.1 4.7-7.4 3.8-7.7 2.7-7.8 .7-52.6 0z"/>
<path stroke="#25acc8" stroke-width="1.29" d="M654.6 643.7l21.3-250.1 34.1 0 17.4 3.5 17 4 17.2 5.5 16.7 8.1 15.7 10.5 14.4 12.8 12.7 14.8 10.6 16.5 8.4 17.9 6 18.8 3.3 19.4 .7 19.5-2 19.1-4.6 18.4-6.9 17.2-9.1 15.7-6.3 4.4-6.6 4.1-6.9 3.7-7.2 3.4-7.3 3-4.7-.3-4.9-.5-4.9-.7-4.9-.9-5.1-1-5-1.3-5.1-1.4-11.1 .6-11.2 .3-27.9 0-25.5 15-23.6 0zM696 597.8l6.3-163.6 7.8-3.4 30.3-3.8 8.9 0 10.1-.1 9.7 1.2 8.3 4.3 7.9 5.3 7.3 6.2 6.7 6.9 5.9 7.6 5.2 8.3 4.3 8.7 3.4 9.1 2.4 9.5 1.6 9.6 .5 9.6-.3 9.7-1.4 9.5-2.3 9.3-3.1 8.9-4.1 8.4-4.9 7.9-5.6 7.2-6.3 6.4-6.9 5.6-7.3 4.7-7.8 3.8-8 2.7-8.1 .5-51.9 0z"/>
<path stroke="#25afc7" stroke-width="1.28" d="M663.9 643.9l19-250.1 34.1 0 17.8 3.1 17.3 3.6 17.6 5.2 17 7.9 16 10.3 14.7 12.7 12.9 14.8 10.8 16.5 8.5 17.9 5.9 19 3.3 19.5 .5 19.6-2.3 19.3-4.8 18.5-7.4 17.2-9.5 15.7-6.3 4.5-6.7 4.2-6.8 3.9-7.2 3.5-7.3 3.1-4.8 0-4.9-.3-4.9-.3-5-.6-5.1-.8-5.1-1-5.2-1.2-10.7 .7-10.8 .3-26.9 0-25.6 13.3-23.4 0zM704.4 599.6l5.6-166.2 8.1-3.4 31-3.3 9.2 .2 10.3 0 10 1.4 8.5 4.3 8.1 5.3 7.5 6.2 6.8 7 6.1 7.7 5.2 8.4 4.4 8.8 3.5 9.3 2.5 9.6 1.5 9.7 .5 9.8-.4 9.8-1.5 9.7-2.4 9.4-3.3 9-4.2 8.5-5.1 8-5.9 7.3-6.5 6.5-7.2 5.6-7.7 4.7-8 3.7-8.3 2.6-8.5 .4-51.3 0z"/>
<path stroke="#25b3c7" stroke-width="1.28" d="M673.3 644.1l16.6-250.2 34.1 0 18.1 2.7 17.7 3.3 18 4.9 17.3 7.6 16.4 10.2 14.9 12.6 13.1 14.7 11 16.6 8.6 18 5.9 19 3.2 19.7 .3 19.7-2.5 19.4-5.2 18.6-7.8 17.3-10 15.7-6.3 4.7-6.6 4.3-6.9 4-7.1 3.6-7.3 3.2-4.9 .2-4.9 .1-5-.1-5.1-.3-5.1-.5-5.1-.7-5.2-.9-10.4 .6-10.4 .3-25.9 .1-25.7 11.6-23.1 0zM712.8 601.4l5-168.8 8.2-3.4 31.9-2.8 9.4 .3 10.5 .2 10.3 1.6 8.7 4.4 8.3 5.3 7.6 6.2 7 7 6.2 7.8 5.4 8.5 4.5 8.9 3.5 9.4 2.5 9.7 1.5 9.9 .5 10-.5 10-1.6 9.8-2.5 9.5-3.5 9.1-4.4 8.7-5.3 8-6.1 7.4-6.8 6.5-7.4 5.7-8 4.7-8.4 3.6-8.6 2.6-8.8 .2-50.6 0z"/>
<path stroke="#25b7c6" stroke-width="1.28" d="M682.7 644.3l14.2-250.2 34.1 0 18.5 2.3 18 2.9 18.4 4.5 17.7 7.4 16.6 10 15.2 12.6 13.4 14.7 11.1 16.6 8.7 18 5.9 19.2 3.1 19.8 .1 19.8-2.7 19.5-5.6 18.7-8.2 17.4-10.5 15.7-6.2 4.8-6.6 4.5-6.9 4.1-7.1 3.7-7.4 3.2-4.8 .6-5 .4-5 .2-5.2-.1-5.1-.2-5.2-.5-5.3-.6-10 .7-9.9 .3-25 0-25.8 10-22.9 0zM721.3 603.2l4.2-171.4 8.5-3.3 32.6-2.5 9.6 .6 10.8 .3 10.6 1.9 8.9 4.3 8.5 5.3 7.8 6.2 7.2 7.1 6.3 7.9 5.5 8.6 4.5 9.1 3.6 9.5 2.5 9.8 1.5 10.1 .5 10.1-.6 10.1-1.6 9.9-2.7 9.7-3.6 9.3-4.7 8.7-5.5 8.2-6.3 7.4-7.1 6.6-7.7 5.7-8.2 4.6-8.7 3.6-9 2.5-59.1 .1z"/>
<path stroke="#26bac6" stroke-width="1.27" d="M692.1 644.5l11.8-250.3 34.1 0 18.9 2 18.4 2.5 18.6 4.2 18.1 7.1 17 9.9 15.5 12.4 13.5 14.7 11.3 16.6 8.7 18.2 6 19.3 2.9 19.8 0 20-3 19.7-5.9 18.7-8.5 17.5-11 15.7-6.3 4.9-6.5 4.6-6.9 4.2-7.1 3.8-7.4 3.4-4.9 .9-5 .7-5.1 .4-5.2 .3-5.2 0-5.2-.2-5.4-.4-4.7 .4-4.8 .3-4.8 .3-28.9 .1-25.7 8.3-22.8 0zM729.8 605l3.5-174 8.6-3.2 33.4-2.1 9.9 .7 11 .6 10.8 2 9.2 4.3 8.6 5.3 8.1 6.3 7.3 7.1 6.5 8 5.5 8.7 4.7 9.2 3.6 9.6 2.6 10 1.5 10.2 .4 10.3-.7 10.2-1.7 10.1-2.8 9.8-3.8 9.4-4.8 8.9-5.7 8.2-6.6 7.5-7.3 6.7-8 5.6-8.6 4.7-8.9 3.6-9.3 2.4-58.8-.1z"/>
<path stroke="#26bec6" stroke-width="1.27" d="M701.5 644.7l9.4-250.3 34.1 0 19.2 1.5 18.8 2.2 19 3.9 18.4 6.9 17.3 9.7 15.8 12.3 13.8 14.7 11.4 16.6 8.8 18.3 5.9 19.3 2.9 20-.2 20.2-3.2 19.7-6.2 18.9-9 17.5-11.5 15.6-6.2 5.2-6.6 4.7-6.8 4.3-7.1 3.9-7.4 3.5-5 1.2-5 .9-5.2 .8-5.2 .5-5.2 .3-5.4 .1-5.3-.1-4.6 .4-4.6 .3-4.6 .2-27.7 .1-25.8 6.7-22.5 0zM738.2 606.8l2.8-176.7 8.8-3.1 34.3-1.6 10 .8 11.4 .8 11 2.2 9.4 4.3 8.8 5.3 8.2 6.3 7.5 7.3 6.6 8 5.7 8.8 4.7 9.3 3.7 9.8 2.6 10.1 1.5 10.4 .4 10.4-.7 10.4-1.9 10.2-2.9 9.9-4 9.6-5 8.9-5.9 8.4-6.8 7.5-7.6 6.7-8.3 5.7-8.8 4.7-9.3 3.5-9.6 2.3-9.7-.2-48.8 0z"/>
<path stroke="#26c1c5" stroke-width="1.26" d="M710.9 644.9l7.1-250.4 34 0 19.6 1.2 19.1 1.8 19.4 3.6 18.8 6.6 17.6 9.6 16 12.2 14 14.6 11.6 16.7 8.9 18.3 5.9 19.5 2.8 20.1-.3 20.3-3.6 19.8-6.5 19-9.4 17.5-12 15.7-6.2 5.3-6.5 4.8-6.8 4.5-7.1 4-7.4 3.6-5 1.5-5.1 1.2-5.2 1-5.3 .8-5.3 .6-5.4 .4-5.4 .1-4.4 .4-4.4 .4-4.4 .2-26.5 .1-25.9 5-22.3 0zM746.7 608.6l2.1-179.3 9-3.1 35-1.2 10.3 1.1 11.6 .9 11.3 2.5 9.6 4.2 9 5.3 8.4 6.4 7.6 7.3 6.8 8.1 5.8 8.9 4.8 9.4 3.7 9.9 2.6 10.3 1.5 10.5 .4 10.6-.8 10.5-2 10.4-3 10-4.1 9.7-5.2 9.1-6.2 8.4-7 7.6-7.9 6.8-8.5 5.7-9.1 4.6-9.6 3.5-9.9 2.3-10.1-.4-48.1 0z"/>
<path stroke="#26c5c5" stroke-width="1.26" d="M720.2 645.1l4.8-250.4 34 0 20 .8 19.4 1.4 19.8 3.2 19.1 6.4 17.9 9.4 16.3 12.2 14.2 14.6 11.8 16.7 8.9 18.4 6 19.6 2.7 20.2-.5 20.4-3.8 20-6.9 19-9.8 17.6-12.5 15.7-6.1 5.4-6.5 5-6.8 4.6-7.2 4.1-7.3 3.7-5.1 1.7-5.1 1.6-5.3 1.3-5.3 1.1-5.3 .8-5.5 .6-5.4 .4-4.2 .5-4.3 .3-4.2 .2-4.2 .2-21.2 0-25.8 3.3-22.1 0zM755.1 610.4l1.4-181.9 9.2-3 35.8-.8 10.6 1.2 11.8 1.1 11.6 2.7 9.8 4.2 9.2 5.3 8.6 6.4 7.8 7.4 6.9 8.2 5.9 9 4.8 9.5 3.8 10.1 2.7 10.4 1.4 10.6 .4 10.8-.9 10.6-2.1 10.6-3.1 10.2-4.3 9.7-5.4 9.2-6.3 8.5-7.3 7.7-8.1 6.8-8.9 5.8-9.4 4.6-9.9 3.4-10.2 2.2-10.4-.5-47.5 0z"/>
<path stroke="#26c8c4" stroke-width="1.25" d="M729.6 645.3l2.4-250.5 34 0 20.3 .4 19.8 1 20.2 3 19.4 6.2 18.3 9.2 16.5 12 14.5 14.6 11.9 16.8 9 18.4 6 19.7 2.6 20.4-.7 20.5-4 20.1-7.3 19.1-10.2 17.7-12.9 15.7-6.2 5.5-6.5 5.2-6.8 4.6-7.1 4.3-7.3 3.8-5.1 2-5.2 1.8-5.3 1.6-5.4 1.4-5.4 1.1-5.5 .9-9.5 1.1-4 .4-4.1 .2-4 .1-20.2 0-25.9 1.7-21.9 0zM763.5 612.2l.8-184.5 9.3-2.9 36.7-.5 10.7 1.4 12.1 1.3 11.9 2.9 10 4.2 9.4 5.3 8.7 6.5 8 7.4 7 8.3 6 9.1 5 9.6 3.8 10.2 2.7 10.6 1.5 10.8 .2 10.8-.9 10.9-2.1 10.6-3.3 10.4-4.5 9.9-5.5 9.3-6.6 8.6-7.5 7.8-8.4 6.8-9.1 5.7-9.7 4.7-10.2 3.4-10.5 2.1-10.7-.7-46.9 0z"/>
<path stroke="#26ccc4" stroke-width="1.25" d="M739 645.5l0-250.5 54.7 0 20.2 .6 20.5 2.7 19.8 5.9 18.5 9.1 16.9 11.9 14.6 14.6 12.1 16.8 9.1 18.5 5.9 19.8 2.6 20.5-.9 20.6-4.3 20.2-7.5 19.3-10.7 17.7-13.4 15.7-6.1 5.7-6.5 5.2-6.8 4.8-7.1 4.4-7.4 3.8-5.1 2.4-5.2 2.1-5.4 1.9-5.4 1.6-5.5 1.4-5.5 1.2-5.6 .9-3.8 .5-3.8 .3-3.8 .3-3.9 .1-66.9 0zM772 614l0-187.1 9.6-2.9 37.4 0 11 1.6 12.4 1.4 12 3.1 10.2 4.2 9.7 5.4 8.9 6.4 8.1 7.5 7.2 8.4 6.1 9.2 5 9.8 3.9 10.3 2.7 10.7 1.5 10.9 .2 11-1 11-2.2 10.8-3.4 10.5-4.7 10-5.7 9.4-6.8 8.7-7.7 7.9-8.6 6.8-9.4 5.8-10.1 4.6-10.5 3.4-10.8 2-11-.8-46.3 0z"/>
<path stroke="#27ccc2" stroke-width="1.25" d="M903.4 455.3l-7.8-7.7-8.7-6.9-9.5-5.7-10-4.6-10.6-3.3-21.9-4-36.4 .4-18.1 .4-.7 40.6-.3 40.7 .1 40.8 .4 40.7 .5 27 36.3 .8 9.1 .1 9.1 1.5 11-.6 10.9-2 10.6-3.3 10-4.6 9.5-5.7 8.7-6.8 7.8-7.8 0-.9 3.8-5 3.3-5.5 3-5.8 2.5-6.1 2-6.5 1.7-6.7 1.3-6.9 1-7.1 .5-7.2 .2-7.3-.2-7.3-.5-7.2-1-7.1-1.3-6.9-1.7-6.7-2-6.5-2.5-6.1-3-5.8-3.3-5.5-3.8-5 0-.4zM749.6 642.2l0-244.2 53.3 0 19.7 .6 20 2.5 19.3 5.8 18.1 8.9 16.4 11.6 14.3 14.2 11.7 16.4 8.9 18.1 5.8 19.3 2.5 19.9-.8 20.2-4.2 19.7-7.4 18.7-10.4 17.3-13.1 15.3-5.9 5.5-6.3 5.1-6.7 4.7-6.9 4.3-7.2 3.8-5 2.3-5.1 2-5.2 1.8-5.3 1.6-5.3 1.4-5.4 1.1-5.4 .9-3.7 .5-3.8 .3-3.7 .3-3.8 .1-65.2 0z"/>
<path stroke="#29cdbf" stroke-width="1.24" d="M912.5 453.8l-7.9-7.7-8.8-6.7-9.5-5.7-10.1-4.4-10.5-3.3-22-3.9-18.4 .4-18.3 .6-18.2 .8-1 26.9-.7 27.1-.3 27.2 0 27.2 .3 27.2 .7 27.1 1 26.9 18.2 .8 18.3 .6 9.2 .2 9.2 1.6 11.1-.6 10.9-1.9 10.5-3.3 10.1-4.4 9.5-5.7 8.8-6.7 7.9-7.6 0-1.8 3.2-4.7 2.7-5.1 2.3-5.7 1.9-6.1 1.6-6.5 1.2-6.8 .9-7.2 .6-7.3 .4-7.6 .1-7.6-.1-7.6-.4-7.5-.6-7.4-.9-7.2-1.2-6.8-1.6-6.5-1.9-6.1-2.3-5.7-2.7-5.1-3.2-4.7 0-.9zM760.2 638.9l0-238 51.9 0 19.2 .6 19.5 2.5 18.8 5.7 17.6 8.6 16 11.3 13.9 13.9 11.5 15.9 8.7 17.6 5.6 18.8 2.4 19.5-.8 19.6-4.1 19.2-7.2 18.3-10.1 16.8-12.7 14.9-5.8 5.4-6.2 5-6.4 4.6-6.8 4.1-7 3.7-4.9 2.2-4.9 2-5.1 1.8-5.1 1.6-5.2 1.3-5.3 1.1-5.3 .8-3.6 .5-3.6 .3-3.7 .3-3.6 .1-63.6 0z"/>
<path stroke="#2acebd" stroke-width="1.24" d="M921.5 452.2l-7.9-7.6-8.8-6.6-9.6-5.5-10.1-4.4-10.6-3.2-21.9-3.7-18.6 .5-18.6 .9-18.3 1.2-1.4 26.8-.6 13.5-.4 13.5-.3 13.6-.2 13.7-.1 13.6 .1 13.7 .2 13.6 .3 13.6 .4 13.5 .6 13.5 1.4 26.8 18.3 1.3 18.6 .9 9.3 .3 9.3 1.6 11.1-.6 10.8-1.8 10.6-3.2 10.1-4.3 9.6-5.6 8.8-6.6 7.9-7.5 0-2.7 2.6-4.3 2.2-4.9 1.7-5.5 1.3-6 1-6.6 .7-7 .5-7.3 .4-7.7 .1-7.8 .1-8-.1-8-.1-7.8-.4-7.7-.5-7.3-.7-7-1-6.6-1.3-6-1.7-5.5-2.2-4.9-2.6-4.3 0-1.3zM770.8 635.6l0-231.7 50.6 0 18.7 .6 18.9 2.4 18.3 5.5 17.2 8.4 15.6 11 13.5 13.5 11.2 15.5 8.4 17.2 5.5 18.3 2.4 18.9-.8 19.1-4 18.7-7 17.8-9.9 16.4-12.4 14.5-5.6 5.3-6 4.8-6.3 4.5-6.6 4-6.8 3.6-4.7 2.2-4.9 1.9-4.9 1.8-5 1.5-5.1 1.3-5.1 1-5.2 .9-3.5 .4-3.5 .3-3.6 .3-65.4 .1z"/>
<path stroke="#2ccebb" stroke-width="1.24" d="M930.6 450.6l-8.1-7.5-8.8-6.5-9.6-5.4-10.1-4.3-10.6-3.1-21.9-3.6-9.5 .3-9.4 .4-9.4 .6-9.3 .6-9.2 .8-9.2 .9-1 13.2-.9 13.4-.7 13.5-.6 13.5-.5 13.6-.2 13.7-.1 13.7 .1 13.6 .2 13.7 .5 13.6 .6 13.5 .7 13.5 .9 13.4 1 13.2 9.2 .9 9.2 .8 9.3 .7 9.4 .5 9.4 .4 9.5 1.7 11-.5 10.9-1.8 10.6-3.1 10.1-4.3 9.6-5.4 8.8-6.5 8.1-7.5 0-3.4 2-4 1.5-4.7 1.1-5.3 .7-6 .5-6.6 .2-7.1 .2-15.5 0-40.9-.2-7.6-.2-7.1-.5-6.6-.7-6-1.1-5.3-1.5-4.7-2-3.9 0-1.8zM781.4 632.3l0-225.5 49.2 0 18.2 .6 18.4 2.4 17.8 5.3 16.7 8.2 15.2 10.7 13.2 13.2 10.8 15.1 8.3 16.6 5.3 17.8 2.3 18.5-.8 18.6-3.8 18.2-6.9 17.3-9.5 15.9-12.1 14.1-5.5 5.1-5.8 4.8-6.2 4.3-6.3 3.9-6.7 3.5-4.6 2.1-4.7 1.9-4.8 1.7-4.9 1.5-4.9 1.2-5 1.1-5 .8-3.5 .4-3.4 .3-3.4 .3-63.7 .1z"/>
<path stroke="#2dceb8" stroke-width="1.23" d="M939.6 449l-8.1-7.4-8.9-6.3-9.6-5.4-10.1-4.2-10.6-3-21.9-3.4-9.6 .3-9.5 .5-9.5 .7-9.4 .8-9.3 1-9.2 1.1-1.3 13.2-1.1 13.3-.9 13.5-.8 13.5-.5 13.6-.4 13.7-.1 13.7 .1 13.7 .4 13.7 .5 13.6 .8 13.5 .9 13.5 1.1 13.3 1.3 13.2 9.2 1.1 9.3 1 9.4 .8 9.5 .7 9.5 .5 9.6 1.6 11-.4 10.9-1.7 10.6-3 10.1-4.2 9.6-5.3 8.9-6.4 8.1-7.4 0-4.3 1.5-3.6 .9-4.4 .5-5.2 .1-5.9-.1-6.7-.8-23.2-.1-8.5-.1-8.7 .1-8.6 .4-16.8 .5-15 .1-6.7-.1-5.9-.5-5.2-.9-4.3-1.5-3.7 0-2.1zM792 629l0-219.2 47.8 0 17.7 .6 17.9 2.3 17.4 5.1 16.2 8 14.7 10.4 12.9 12.8 10.5 14.7 8 16.2 5.2 17.3 2.2 17.9-.7 18.1-3.8 17.7-6.6 16.8-9.3 15.5-11.8 13.8-5.3 4.9-5.7 4.6-5.9 4.2-6.2 3.8-6.5 3.4-4.5 2.1-4.6 1.8-4.6 1.7-4.8 1.4-4.8 1.2-4.8 1-4.9 .8-3.3 .4-3.4 .3-3.3 .3-61.9 .1z"/>
<path stroke="#2ecfb6" stroke-width="1.23" d="M948.7 447.4l-8.2-7.2-8.9-6.3-9.7-5.2-10.1-4.2-10.6-2.9-22-3.3-9.6 .5-9.7 .6-9.5 .8-9.5 1-9.4 1.1-9.2 1.4-1.6 13.1-1.3 13.3-1.1 13.4-.9 13.5-.7 13.6-.4 13.7-.1 13.7 .1 13.8 .4 13.7 .7 13.6 .9 13.5 1.1 13.4 1.3 13.3 1.6 13.1 9.2 1.3 9.4 1.2 9.5 1 9.5 .8 9.7 .6 9.6 1.7 11.1-.3 10.9-1.7 10.6-2.9 10.1-4.1 9.7-5.3 8.9-6.2 8.2-7.3 0-5.2 .8-3.3 .3-4.1-.1-5-.4-5.9-1.4-14.1-.7-8-.5-8.5-.4-8.8-.1-9 .1-9 .4-8.8 .5-8.5 2.1-22.1 .4-5.9 .1-5-.3-4.1-.8-3.3 0-2.6zM802.6 625.7l0-212.9 46.5 0 17.1 .5 17.5 2.2 16.8 5.1 15.8 7.7 14.3 10.2 12.4 12.3 10.3 14.3 7.7 15.8 5.1 16.8 2.2 17.4-.8 17.5-3.6 17.2-6.5 16.4-9 15-11.4 13.4-5.2 4.8-5.5 4.4-5.8 4.1-6 3.7-6.3 3.3-4.4 2-4.4 1.8-4.6 1.6-4.5 1.4-4.7 1.2-4.7 1-4.7 .8-6.5 .7-6.6 .3-56.8 0z"/>
<path stroke="#30d0b4" stroke-width="1.23" d="M957.7 445.8l-8.2-7.1-9-6.2-9.7-5.1-10.2-4-10.6-2.9-21.9-3.1-9.8 .5-9.7 .7-9.7 .9-9.5 1.2-9.5 1.4-9.3 1.5-1.7 13.1-1.6 13.2-1.3 13.4-1.1 13.5-.7 13.6-.5 13.7-.1 13.8 .1 13.7 .5 13.7 .7 13.7 1.1 13.5 1.3 13.4 1.6 13.2 1.7 13 9.3 1.6 9.5 1.4 9.5 1.1 9.7 1 9.7 .7 9.8 1.7 11-.3 10.9-1.6 10.6-2.8 10.2-4 9.7-5.2 9-6.2 8.2-7.1 0-6.1 .3-2.9-.3-3.8-.7-4.9-2.3-12.6-1.2-7.5-1-8.2-.9-8.8-.5-9.1-.2-9.4 .2-9.3 .5-9.2 .9-8.8 1-8.2 1.2-7.5 2.3-12.6 .7-4.8 .3-3.9-.3-2.9 0-3zM813.2 622.4l0-206.7 45.1 0 16.7 .6 16.9 2.1 16.3 4.9 15.3 7.5 13.9 9.9 12.1 12 9.9 13.8 7.6 15.3 4.9 16.3 2.1 16.9-.7 17.1-3.6 16.7-6.2 15.8-8.8 14.6-11.1 13-5 4.7-5.3 4.3-5.7 4-5.8 3.5-6.1 3.2-4.2 2-4.4 1.7-4.4 1.6-4.4 1.3-4.5 1.2-4.6 .9-4.6 .8-6.3 .7-6.3 .3-55.2 0z"/>
<path stroke="#31d0b1" stroke-width="1.22" d="M966.8 444.2l-8.3-7-9.1-6.1-9.7-5-10.2-3.9-10.6-2.8-21.9-3-9.9 .6-9.9 .8-9.7 1.1-9.7 1.3-9.4 1.6-9.4 1.8-2 12.9-1.8 13.2-1.5 13.4-1.2 13.5-.9 13.6-.5 13.7-.2 13.8 .2 13.8 .5 13.7 .9 13.7 1.2 13.5 1.5 13.3 1.8 13.2 2 13 9.4 1.8 9.4 1.5 9.7 1.3 9.7 1.1 9.9 .8 9.9 1.8 11-.3 10.9-1.5 10.6-2.7 10.2-4 9.7-5 9.1-6.1 8.3-7 0-7-.3-2.5-.9-3.6-3-10.5-1.8-6.7-1.6-7.7-1.5-8.5-1.1-9-.8-9.5-.2-9.7 .2-9.7 .8-9.4 1.1-9.1 1.5-8.4 1.6-7.7 1.8-6.8 3-10.4 .9-3.7 .3-2.5 0-3.5zM823.8 619.1l0-200.4 43.7 0 16.2 .5 16.4 2.1 15.8 4.7 14.9 7.3 13.4 9.6 11.8 11.6 9.6 13.4 7.3 14.9 4.8 15.8 2 16.4-.7 16.5-3.4 16.2-6.1 15.4-8.5 14.1-10.7 12.6-4.9 4.5-5.2 4.2-5.4 3.9-5.7 3.5-5.9 3.1-4.1 1.8-4.2 1.7-4.3 1.5-4.3 1.3-4.4 1.2-4.4 .9-4.5 .7-6.1 .7-6.1 .3-53.5 0z"/>
<path stroke="#33d0af" stroke-width="1.22" d="M975.8 442.6l-8.3-6.9-9.1-5.9-9.8-5-10.2-3.8-10.6-2.7-21.9-2.8-10.1 .6-9.9 1-9.9 1.2-9.7 1.5-9.5 1.7-9.4 2-2.3 12.9-2 13.1-1.7 13.3-1.3 13.6-1 13.6-.6 13.8-.2 13.8 .2 13.8 .6 13.7 1 13.7 1.3 13.5 1.7 13.3 2 13.1 2.3 12.9 9.4 2 9.5 1.8 9.7 1.4 9.9 1.3 9.9 .9 10.1 1.8 11-.2 10.9-1.5 10.6-2.7 10.2-3.8 9.8-4.9 9.1-6 8.3-6.9 0-7.8-.9-2.2-3.4-7.9-2.3-5.7-2.2-6.8-2.2-7.9-1.8-8.6-1.5-9.3-.9-9.8-.3-10.1 .3-10 .9-9.8 1.5-9.3 1.8-8.7 2.2-7.8 2.2-6.8 2.3-5.7 3.4-7.9 .9-2.2 0-3.9zM834.4 615.8l0-194.2 42.4 0 15.6 .5 15.9 2.1 15.3 4.6 14.4 7 13.1 9.3 11.3 11.3 9.4 13 7.1 14.3 4.6 15.4 1.9 15.8-.6 16-3.4 15.7-5.8 14.9-8.3 13.7-10.4 12.2-4.7 4.4-5 4.1-5.3 3.7-5.5 3.4-5.7 3-4 1.8-4.1 1.6-4.1 1.5-4.2 1.3-4.2 1-4.3 .9-4.3 .7-6 .7-5.9 .3-51.8 0z"/>
<path stroke="#34d1ac" stroke-width="1.22" d="M984.9 441l-8.5-6.7-9.1-5.9-9.8-4.8-10.2-3.8-10.7-2.6-10.9-1.4-11-1.3-10.1 .8-10.1 1-9.9 1.3-9.8 1.7-9.6 1.9-9.4 2.3-2.6 12.8-2.2 13-1.9 13.3-1.5 13.5-1.1 13.7-.6 13.8-.3 13.8 .3 13.8 .6 13.8 1.1 13.7 1.5 13.5 1.9 13.3 2.2 13 2.6 12.8 9.4 2.3 9.6 1.9 9.8 1.7 9.9 1.3 10.1 1 10.1 1.9 11-.2 10.9-1.4 10.7-2.6 10.2-3.7 9.8-4.9 9.1-5.8 8.5-6.8 0-8.7-1.5-1.8-2.1-3.1-2.6-4.4-2.8-5.7-2.8-6.8-2.7-8-2.2-8.9-1.7-9.6-1.1-10.1-.4-10.4 .4-10.4 1.1-10.1 1.7-9.6 2.2-8.9 2.7-7.9 2.8-6.9 2.8-5.6 2.6-4.4 2.1-3.1 1.5-1.8 0-4.4zM845 612.5l0-187.9 41 0 15.1 .5 15.4 2 14.9 4.4 13.9 6.8 12.6 9 11 10.9 9 12.6 6.9 13.9 4.4 14.8 2 15.4-.7 15.5-3.2 15.1-5.7 14.5-8 13.2-10 11.8-4.6 4.3-4.9 3.9-5.1 3.6-5.3 3.3-5.5 2.9-3.9 1.7-3.9 1.6-4 1.4-4.1 1.3-4.1 1-4.1 .9-4.2 .7-5.7 .6-5.8 .3-50.2 0z"/>
<path stroke="#35d2aa" stroke-width="1.21" d="M993.9 439.4l-8.5-6.6-9.2-5.8-9.8-4.7-10.2-3.6-10.7-2.6-10.9-1.3-11-1.2-10.2 .8-10.2 1.1-10 1.5-9.9 1.8-9.7 2.2-9.4 2.4-2.8 12.7-2.5 13.1-2 13.2-1.7 13.5-1.2 13.7-.7 13.8-.3 13.8 .3 13.9 .7 13.8 1.2 13.6 1.7 13.5 2 13.3 2.5 13.1 2.8 12.7 9.4 2.4 9.7 2.2 9.9 1.8 10 1.5 10.2 1.1 10.2 1.9 11-.1 10.9-1.4 10.7-2.5 10.2-3.6 9.8-4.8 9.2-5.7 8.5-6.7 0-9.6-2-1.5-2.8-2.8-3.1-4.2-3.4-5.6-3.4-6.9-3.1-8.1-2.7-9.1-2-9.9-1.3-10.4-.4-10.8 .4-10.7 1.3-10.4 2-9.9 2.7-9.1 3.1-8.1 3.4-6.9 3.4-5.6 3.1-4.2 2.8-2.9 2-1.4 0-4.9zM855.6 609.2l0-181.6 39.6 0 14.7 .4 14.8 1.9 14.4 4.3 13.4 6.6 12.3 8.7 10.6 10.5 8.7 12.2 6.6 13.4 4.3 14.4 1.9 14.8-.6 15-3.1 14.7-5.5 13.9-7.8 12.8-9.7 11.4-4.4 4.1-4.7 3.8-4.9 3.5-5.2 3.2-5.3 2.8-3.8 1.7-3.8 1.5-3.8 1.4-3.9 1.2-4 1-4 .8-4.1 .7-5.5 .6-5.6 .3-48.5 0z"/>
<path stroke="#37d2a8" stroke-width="1.21" d="M1002.9 437.9l-8.5-6.6-9.2-5.6-9.9-4.7-10.3-3.5-10.6-2.5-10.9-1.2-11-1.2-10.4 .9-10.2 1.3-10.2 1.6-9.9 1.9-9.8 2.4-9.5 2.6-3 12.7-2.7 13-2.2 13.2-1.8 13.5-1.4 13.7-.7 13.8-.3 13.9 .3 13.9 .7 13.8 1.4 13.6 1.8 13.5 2.2 13.3 2.7 13 3 12.6 9.5 2.7 9.8 2.3 9.9 2 10.2 1.6 10.2 1.3 10.4 1.9 11-.1 10.9-1.3 10.6-2.4 10.3-3.6 9.9-4.6 9.2-5.6 8.5-6.6 0-10.5-2.6-1.1-3.3-2.6-3.8-4-4-5.6-3.9-6.9-3.6-8.3-3-9.3-2.4-10.1-1.4-10.8-.5-11.1 .5-11 1.4-10.8 2.4-10.2 3-9.3 3.6-8.2 3.9-7 4-5.5 3.8-4.1 3.3-2.5 2.6-1.2 0-5.2zM866.2 605.9l0-175.4 38.3 0 14.1 .5 14.4 1.8 13.8 4.2 13 6.3 11.8 8.4 10.2 10.2 8.5 11.7 6.4 13 4.1 13.8 1.8 14.4-.6 14.4-3 14.2-5.3 13.4-7.4 12.4-9.4 11-4.3 4-4.5 3.7-4.8 3.4-5 3-5.1 2.7-3.6 1.7-3.7 1.4-3.7 1.4-3.8 1.1-3.8 1-3.9 .8-3.9 .6-5.4 .6-5.3 .3-46.9 0z"/>
<path stroke="#38d2a5" stroke-width="1.21" d="M1012 436.3l-8.6-6.5-9.3-5.5-9.9-4.5-10.3-3.5-10.7-2.4-10.8-1.2-11-1-10.5 .9-10.4 1.4-10.2 1.7-10 2.2-9.9 2.5-9.5 2.9-3.3 12.6-2.9 12.9-2.4 13.2-2 13.5-1.4 13.7-.9 13.8-.3 13.9 .3 13.9 .9 13.8 1.4 13.7 2 13.5 2.4 13.3 2.9 12.9 3.3 12.6 9.5 2.8 9.9 2.6 10 2.1 10.2 1.8 10.4 1.3 10.5 2 11-.1 10.8-1.2 10.7-2.3 10.3-3.5 9.9-4.5 9.3-5.6 8.6-6.4 0-11.4-3.2-.7-3.9-2.3-4.4-3.9-4.6-5.5-4.5-7-4-8.4-3.5-9.5-2.6-10.5-1.6-11-.6-11.5 .6-11.4 1.6-11.1 2.6-10.4 3.5-9.5 4-8.4 4.5-7 4.6-5.5 4.4-3.9 3.9-2.3 3.2-.8 0-5.7zM876.8 602.6l0-169.1 36.9 0 13.6 .4 13.9 1.8 13.3 4 12.6 6.1 11.3 8.1 9.9 9.8 8.2 11.3 6.1 12.6 4 13.3 1.7 13.8-.5 14-2.9 13.6-5.1 13-7.2 11.9-9.1 10.7-4.1 3.8-4.4 3.5-4.6 3.3-4.8 2.9-4.9 2.6-3.5 1.6-3.5 1.4-3.6 1.3-3.7 1.1-3.7 1-3.7 .7-3.8 .6-5.1 .6-5.2 .3-45.2 0z"/>
<path stroke="#3ad3a3" stroke-width="1.20" d="M1021 434.7l-8.6-6.4-9.4-5.4-9.9-4.4-10.3-3.4-10.7-2.3-10.9-1.1-11-.9-10.6 1-10.4 1.4-10.4 1.9-10.1 2.3-9.8 2.7-9.6 3.1-3.6 12.5-3.1 12.9-2.6 13.2-2.1 13.5-1.5 13.7-1 13.8-.3 14 .3 13.9 1 13.8 1.5 13.7 2.1 13.5 2.6 13.2 3.1 12.9 3.6 12.5 9.6 3.1 9.8 2.7 10.1 2.3 10.4 1.9 10.4 1.5 10.6 1.9 11 .1 10.9-1.2 10.7-2.2 10.3-3.4 9.9-4.5 9.4-5.4 8.6-6.3 0-12.2-3.7-.4-4.6-2.1-5-3.7-5.2-5.5-5-7-4.5-8.5-3.9-9.8-2.9-10.7-1.8-11.4-.6-11.8 .6-11.7 1.8-11.4 2.9-10.8 3.9-9.7 4.5-8.5 5-7 5.2-5.5 5-3.7 4.6-2.1 3.7-.4 0-6.1zM887.4 599.3l0-162.9 35.5 0 13.2 .5 13.3 1.7 12.8 3.8 12.1 5.9 11 7.8 9.5 9.5 7.8 10.9 6 12 3.8 12.9 1.7 13.3-.6 13.4-2.8 13.2-4.9 12.4-6.9 11.6-8.7 10.2-4 3.7-4.2 3.4-4.4 3.1-4.7 2.8-4.7 2.5-3.4 1.6-3.4 1.3-3.5 1.3-3.5 1-3.5 .9-3.6 .8-3.7 .6-4.9 .5-5 .3-43.5 0z"/>
<path stroke="#3bd4a1" stroke-width="1.20" d="M1030.1 433.1l-8.8-6.2-9.3-5.3-10-4.4-10.3-3.3-10.7-2.2-10.9-1-11-.9-10.7 1.1-10.6 1.5-10.4 2.1-10.2 2.4-9.9 2.9-9.6 3.4-3.8 12.4-3.4 12.8-2.8 13.2-2.2 13.5-1.7 13.7-1 13.9-.3 13.9 .3 13.9 1 13.9 1.7 13.7 2.2 13.5 2.8 13.2 3.4 12.8 3.8 12.4 9.6 3.4 9.9 2.9 10.2 2.4 10.4 2.1 10.6 1.5 10.7 2 11 .1 10.9-1.1 10.7-2.2 10.3-3.3 10-4.3 9.3-5.3 8.8-6.2 0-13.1-4.4-.1-5.1-1.8-5.7-3.6-5.7-5.3-5.5-7.1-5.1-8.7-4.2-9.9-3.2-11-2-11.8-.7-12.1 .7-12.1 2-11.7 3.2-11 4.2-10 5.1-8.6 5.5-7.1 5.7-5.4 5.7-3.6 5.1-1.8 4.4 0 0-6.6zM898 596l0-156.6 34.2 0 12.6 .4 12.8 1.6 12.4 3.7 11.6 5.7 10.5 7.5 9.2 9.1 7.5 10.5 5.7 11.6 3.7 12.3 1.6 12.8-.5 12.9-2.7 12.7-4.8 12-6.6 11.1-8.4 9.8-3.8 3.5-4.1 3.3-4.2 3-4.4 2.7-4.7 2.5-3.2 1.4-3.2 1.3-3.4 1.2-3.4 1-3.4 .9-3.4 .7-3.5 .6-4.8 .5-4.8 .3-41.8 0z"/>
<path stroke="#3cd49e" stroke-width="1.20" d="M1039.1 431.5l-8.8-6.1-9.4-5.2-10-4.2-10.3-3.2-10.7-2.2-10.9-1-11-.7-10.8 1.1-10.7 1.7-10.5 2.1-10.3 2.7-10 3.1-9.6 3.5-4.1 12.4-3.6 12.7-3 13.2-2.4 13.5-1.7 13.7-1.1 13.9-.4 13.9 .4 14 1.1 13.9 1.7 13.7 2.4 13.5 3 13.1 3.6 12.8 4.1 12.4 9.6 3.5 10 3.1 10.3 2.7 10.5 2.1 10.7 1.7 10.8 2 11 .2 10.9-1.1 10.7-2.1 10.3-3.2 10-4.2 9.4-5.2 8.8-6.1 0-14-4.9 .3-5.8-1.5-6.2-3.5-6.3-5.3-6.1-7.1-5.5-8.8-4.7-10.2-3.5-11.2-2.2-12.1-.7-12.5 .7-12.4 2.2-12.1 3.5-11.3 4.7-10.1 5.5-8.8 6.1-7.1 6.3-5.4 6.2-3.4 5.8-1.5 4.9 .3 0-7zM908.6 592.7l0-150.3 32.8 0 12.1 .3 12.3 1.6 11.9 3.6 11.1 5.4 10.1 7.2 8.8 8.7 7.3 10.1 5.4 11.1 3.6 11.9 1.5 12.3-.5 12.4-2.6 12.1-4.5 11.5-6.4 10.7-8 9.4-3.7 3.4-3.9 3.1-4.1 2.9-4.2 2.6-4.5 2.4-3 1.4-3.2 1.2-3.2 1.2-3.2 1-3.3 .8-3.3 .7-3.4 .5-4.6 .5-4.6 .2-40.1 .1z"/>
<path stroke="#3ed49c" stroke-width="1.19" d="M1048.2 429.9l-8.9-6-9.5-5.1-10-4.1-10.4-3.1-10.7-2.1-10.9-.9-10.9-.7-11 1.2-10.8 1.8-10.6 2.3-10.3 2.8-10.1 3.3-9.7 3.8-4.3 12.2-3.8 12.8-3.2 13.1-2.5 13.4-1.9 13.8-1.1 13.9-.4 14 .4 14 1.1 13.9 1.9 13.7 2.5 13.5 3.2 13.1 3.8 12.7 4.3 12.3 9.7 3.8 10.1 3.3 10.3 2.8 10.6 2.3 10.8 1.7 11 2.1 10.9 .2 10.9-.9 10.7-2.1 10.4-3.1 10-4.1 9.5-5.1 8.9-6 0-14.9-5.5 .7-6.4-1.3-6.9-3.3-6.9-5.2-6.6-7.2-6-8.9-5-10.4-3.8-11.6-2.4-12.4-.8-12.8 .8-12.8 2.4-12.3 3.8-11.6 5-10.4 6-8.9 6.6-7.2 6.9-5.3 6.9-3.2 6.4-1.3 5.5 .7 0-7.5zM919.2 589.4l0-144.1 31.4 0 11.6 .4 11.8 1.5 11.4 3.4 10.7 5.2 9.7 6.9 8.4 8.4 6.9 9.6 5.3 10.7 3.4 11.4 1.5 11.7-.5 11.9-2.5 11.6-4.4 11.1-6.1 10.2-7.7 9-3.5 3.3-3.7 3-3.9 2.8-4.1 2.5-4.3 2.2-2.9 1.3-3 1.2-3.1 1.1-3.1 1-3.2 .8-3.1 .6-5.4 .8-4.4 .4-40.7 .1z"/>
<path stroke="#3fd59a" stroke-width="1.19" d="M1057.2 428.3l-8.9-5.9-9.5-5-10.1-4-10.4-3-10.7-2-10.9-.8-11-.6-11 1.3-10.9 1.8-10.7 2.4-10.4 3-10.2 3.5-9.7 4-4.6 12.2-4 12.7-3.4 13.1-2.7 13.4-1.9 13.8-1.2 13.9-.4 14 .4 14 1.2 14 1.9 13.7 2.7 13.5 3.4 13.1 4 12.6 4.6 12.2 9.7 4 10.2 3.5 10.4 3 10.7 2.4 10.9 1.9 11 2.1 11 .2 10.9-.8 10.7-2 10.4-3 10.1-4.1 9.5-4.9 8.9-5.9 0-15.7-6.1 1-7-1-7.4-3.2-7.5-5.2-7.2-7.2-6.5-9.1-5.4-10.6-4.1-11.8-2.5-12.7-.9-13.2 .9-13.1 2.5-12.7 4.1-11.9 5.4-10.6 6.5-9 7.2-7.2 7.5-5.2 7.4-3.2 7-1 6.1 1 0-7.8zM929.8 586.1l0-137.8 30.1 0 11.1 .3 11.2 1.5 10.9 3.2 10.2 5 9.3 6.6 8.1 8 6.6 9.2 5 10.2 3.3 10.9 1.4 11.3-.5 11.4-2.3 11.1-4.2 10.5-5.9 9.8-7.3 8.6-3.4 3.1-3.6 2.9-3.7 2.7-3.9 2.4-4.1 2.1-2.8 1.3-2.9 1.2-2.9 1-3 .9-3 .8-3 .6-5.2 .7-4.2 .4-38.9 .1z"/>
<path stroke="#41d697" stroke-width="1.19" d="M1066.3 426.7l-9-5.7-9.6-4.9-10.1-4-10.4-2.9-10.7-1.9-10.9-.8-11-.5-11.2 1.4-11 2-10.7 2.5-10.6 3.1-10.1 3.7-9.8 4.3-4.8 12.1-4.3 12.6-3.5 13.1-2.9 13.4-2.1 13.8-1.2 13.9-.5 14.1 .5 14 1.2 14 2.1 13.7 2.9 13.4 3.5 13.1 4.3 12.6 4.8 12.2 9.8 4.2 10.1 3.7 10.6 3.1 10.7 2.6 11 1.9 11.2 2.2 11 .3 10.9-.8 10.7-1.9 10.4-3 10.1-3.9 9.6-4.9 9-5.7 0-16.6-6.7 1.3-7.6-.7-8.1-3-8.1-5.1-7.7-7.3-6.9-9.2-5.9-10.8-4.3-12.1-2.8-13.1-.9-13.5 .9-13.4 2.8-13.1 4.3-12.1 5.9-10.8 6.9-9.2 7.7-7.3 8.1-5.1 8.1-3 7.6-.8 6.7 1.4 0-8.3zM940.4 582.8l0-131.6 28.7 0 10.6 .4 10.8 1.4 10.4 3.1 9.7 4.7 8.8 6.3 7.7 7.7 6.4 8.8 4.8 9.7 3.1 10.4 1.3 10.7-.4 10.9-2.3 10.6-4 10.1-5.6 9.3-7 8.2-3.2 3-3.4 2.8-3.6 2.5-3.7 2.3-3.9 2-2.7 1.2-2.7 1.2-2.8 .9-2.9 .9-2.8 .7-2.9 .6-5 .8-4 .3-37.1 .1z"/>
<path stroke="#42d695" stroke-width="1.19" d="M1075.3 425.1l-9-5.6-9.7-4.8-10.1-3.8-10.4-2.9-10.8-1.8-10.9-.7-10.9-.4-11.3 1.4-11.1 2.1-10.9 2.7-10.6 3.3-10.2 3.9-9.8 4.4-5.1 12-4.5 12.6-3.7 13.1-3 13.4-2.2 13.8-1.3 13.9-.5 14.1 .5 14.1 1.3 13.9 2.2 13.8 3 13.4 3.7 13.1 4.5 12.6 5.1 12 9.8 4.4 10.2 3.9 10.6 3.3 10.9 2.7 22.4 4.3 10.9 .3 10.9-.7 10.8-1.8 10.4-2.9 10.1-3.8 9.7-4.8 9-5.6 0-17.5-7.2 1.7-8.2-.5-8.7-2.8-8.7-5.1-8.3-7.3-7.4-9.3-6.2-11.1-4.7-12.4-2.9-13.3-1-13.9 1-13.8 2.9-13.3 4.7-12.4 6.2-11.1 7.4-9.3 8.3-7.3 8.7-5.1 8.7-2.8 8.2-.5 7.2 1.7 0-8.7zM951 579.5l0-125.3 27.3 0 10.1 .3 10.3 1.3 9.9 3 9.3 4.5 8.4 6 7.3 7.3 6 8.4 4.6 9.3 3 9.8 1.2 10.3-.4 10.3-2.1 10.1-3.8 9.6-5.3 8.9-6.8 7.8-3 2.9-3.2 2.6-3.4 2.4-3.6 2.2-3.7 1.9-2.6 1.2-2.6 1.1-2.6 .9-2.7 .8-2.8 .7-2.7 .6-4.7 .7-3.9 .3-35.3 .1z"/>
<path stroke="#43d693" stroke-width="1.18" d="M1084.4 423.5l-9.2-5.5-9.6-4.7-10.2-3.7-10.5-2.7-10.7-1.8-10.9-.6-10.9-.4-11.4 1.5-11.3 2.2-10.9 2.8-10.7 3.5-10.3 4.1-9.9 4.6-5.3 12-4.7 12.5-3.9 13.1-3.2 13.4-2.3 13.8-1.4 13.9-.4 14.1 .4 14.1 1.4 14 2.3 13.8 3.2 13.4 3.9 13 4.7 12.6 5.3 11.9 9.9 4.7 10.3 4.1 10.7 3.4 10.9 2.9 22.7 4.4 10.9 .4 10.9-.7 10.7-1.8 10.5-2.7 10.2-3.7 9.6-4.7 9.2-5.5 0-18.4-7.9 2.1-8.8-.2-9.3-2.7-9.2-5-8.9-7.4-7.9-9.5-6.6-11.2-5-12.7-3.1-13.7-1-14.1 1-14.2 3.1-13.7 5-12.7 6.6-11.2 7.9-9.5 8.9-7.4 9.2-5 9.3-2.7 8.8-.2 7.9 2.1 0-9.2zM961.6 576.1l0-118.9 26 0 9.6 .3 9.7 1.2 9.4 2.8 8.8 4.3 8 5.7 7 6.9 5.7 8 4.3 8.8 2.9 9.4 1.2 9.7-.4 9.9-2.1 9.6-3.6 9.1-5 8.4-6.4 7.5-2.9 2.6-3.1 2.5-3.2 2.3-3.4 2.1-3.5 1.8-2.4 1.2-2.5 1-2.5 .9-2.6 .7-2.6 .7-2.6 .5-4.5 .7-3.6 .3-33.6 0z"/>
<path stroke="#45d790" stroke-width="1.18" d="M1093.4 422l-9.2-5.5-9.7-4.5-10.2-3.7-10.5-2.6-10.7-1.7-10.9-.6-11-.2-11.5 1.6-11.3 2.2-11.1 3-10.7 3.6-10.4 4.3-9.9 4.9-5.6 11.9-4.9 12.5-4.1 12.9-3.3 13.5-2.4 13.7-1.5 14.1-.5 14.1 .5 14.1 1.5 14 2.4 13.8 3.3 13.4 4.1 13 4.9 12.5 5.6 11.9 9.9 4.9 10.4 4.2 10.7 3.7 11.1 2.9 22.8 4.6 11 .4 10.9-.6 10.7-1.7 10.5-2.6 10.2-3.7 9.7-4.5 9.2-5.5 0-19.2-8.4 2.5-9.4 0-9.9-2.5-9.9-5-9.3-7.4-8.4-9.6-7-11.5-5.3-12.9-3.3-14-1.1-14.5 1.1-14.6 3.3-14 5.3-12.9 7-11.5 8.4-9.6 9.3-7.4 9.9-5 9.9-2.5 9.4 0 8.4 2.5 0-9.6zM972.2 572.8l0-112.7 24.6 0 9.1 .3 9.2 1.2 8.9 2.7 8.4 4 7.6 5.4 6.5 6.6 5.5 7.5 4.1 8.4 2.6 8.9 1.2 9.2-.4 9.3-1.9 9.1-3.4 8.6-4.8 8-6.1 7.1-2.7 2.5-2.9 2.4-3.1 2.1-3.2 2-3.3 1.8-2.3 1-2.4 1-2.4 .8-2.4 .7-2.5 .7-2.4 .5-4.3 .6-3.4 .3-31.8 0z"/>
<path stroke="#46d88e" stroke-width="1.18" d="M1102.5 420.4l-9.3-5.3-9.8-4.5-10.2-3.5-10.5-2.6-10.8-1.6-10.9-.5-10.9-.2-11.6 1.7-11.4 2.4-11.2 3.1-10.8 3.8-10.5 4.4-9.9 5.1-5.8 11.9-5.2 12.4-4.3 12.9-3.4 13.5-2.6 13.7-1.5 14.1-.5 14.1 .5 14.2 1.5 14 2.6 13.8 3.4 13.4 4.3 13 5.2 12.4 5.8 11.8 9.9 5.1 10.5 4.5 10.8 3.8 11.2 3.1 11.4 2.3 11.6 2.3 10.9 .5 10.9-.5 10.8-1.6 10.5-2.6 10.2-3.5 9.8-4.4 9.3-5.4 0-20-9 2.8-10.1 .2-10.5-2.3-10.4-4.9-9.9-7.5-8.9-9.7-7.4-11.7-5.6-13.2-3.4-14.4-1.2-14.8 1.2-14.9 3.4-14.3 5.6-13.3 7.4-11.7 8.9-9.7 9.9-7.4 10.4-5 10.5-2.3 10.1 .3 9 2.8 0-10.1zM982.8 569.5l0-106.4 23.2 0 8.6 .3 8.7 1.1 8.4 2.5 7.9 3.8 7.2 5.1 6.2 6.2 5.1 7.1 3.9 7.9 2.5 8.4 1.1 8.7-.3 8.8-1.9 8.6-3.2 8.2-4.5 7.5-5.7 6.7-2.6 2.4-2.8 2.2-2.8 2.1-3.1 1.8-3.1 1.7-2.2 1-2.2 .9-2.3 .8-2.3 .7-2.3 .6-2.4 .4-3.9 .6-4.9 .3-28.5 0z"/>
<path stroke="#48d88c" stroke-width="1.17" d="M1111.5 418.8l-9.3-5.2-9.8-4.4-10.3-3.4-10.5-2.5-10.8-1.5-10.9-.5-10.9 0-11.8 1.7-11.5 2.5-11.2 3.2-11 4-10.4 4.7-10 5.3-6.1 11.7-5.3 12.4-4.6 12.9-3.6 13.5-2.6 13.7-1.6 14.1-.5 14.2 .5 14.1 1.6 14.1 2.6 13.8 3.6 13.4 4.6 12.9 5.3 12.4 6.1 11.7 10 5.4 10.4 4.6 11 4 11.2 3.2 11.5 2.5 11.8 2.3 10.9 .6 10.9-.5 10.8-1.5 10.5-2.5 10.3-3.4 9.8-4.4 9.3-5.2 0-20.9-9.6 3.1-10.6 .6-11.1-2.2-11.1-4.9-10.4-7.5-9.4-9.9-7.8-11.9-5.8-13.5-3.7-14.6-1.2-15.2 1.2-15.3 3.7-14.6 5.8-13.5 7.8-11.9 9.4-9.9 10.4-7.5 11.1-4.9 11.1-2.2 10.6 .6 9.6 3.1 0-10.4zM993.4 566.2l0-100.2 21.9 0 8 .3 8.2 1 8 2.4 7.4 3.6 6.7 4.8 5.9 5.9 4.8 6.7 3.7 7.4 2.3 7.9 1.1 8.2-.4 8.3-1.7 8-3 7.7-4.3 7.1-5.4 6.3-2.4 2.3-2.6 2.1-2.7 1.9-2.9 1.7-2.9 1.6-2.1 .9-2.1 .9-2.1 .7-2.2 .7-2.1 .5-2.3 .5-3.7 .5-4.6 .3-26.8 0z"/>
<path stroke="#49d889" stroke-width="1.17" d="M1120.6 417.2l-9.4-5.1-9.9-4.2-10.3-3.4-10.5-2.4-10.8-1.4-10.9-.4-10.9 0-11.9 1.8-11.6 2.6-11.4 3.4-11 4.1-10.5 4.9-10 5.5-6.4 11.7-5.5 12.3-4.8 12.9-3.7 13.4-2.7 13.8-1.7 14.1-.6 14.2 .6 14.2 1.7 14.1 2.7 13.8 3.7 13.4 4.8 12.9 5.5 12.3 6.4 11.7 10 5.5 10.5 4.9 11 4.1 11.4 3.4 11.6 2.6 11.9 2.3 10.9 .6 10.9-.4 10.8-1.4 10.5-2.4 10.3-3.3 9.9-4.3 9.4-5.1 0-21.8-10.2 3.5-11.2 .8-11.8-2-11.6-4.8-11-7.6-9.8-10-8.2-12.1-6.2-13.8-3.8-15-1.3-15.5 1.3-15.6 3.8-15 6.2-13.8 8.2-12.1 9.8-10 11-7.5 11.6-4.9 11.8-2 11.2 .8 10.2 3.5 0-10.9zM1004 562.9l0-93.9 20.5 0 7.6 .2 7.7 1 7.4 2.2 6.9 3.4 6.4 4.5 5.5 5.5 4.5 6.3 3.4 6.9 2.2 7.5 1 7.6-.3 7.8-1.6 7.6-2.9 7.2-4 6.6-5 5.9-2.3 2.1-2.4 2-2.6 1.8-2.6 1.6-2.8 1.5-3.9 1.7-4 1.3-4.2 .9-3.5 .6-4.3 .2-25.1 0z"/>
<path stroke="#4ad987" stroke-width="1.17" d="M1129.6 415.6l-9.4-5-10-4.1-10.3-3.2-10.6-2.3-10.7-1.4-11-.3-10.9 .1-11.9 1.9-11.8 2.7-11.4 3.5-11.1 4.2-10.6 5.1-10.1 5.8-6.6 11.6-5.7 12.2-4.9 12.9-3.9 13.4-2.9 13.8-1.7 14.1-.6 14.2 .6 14.3 1.7 14.1 2.9 13.8 3.9 13.4 4.9 12.8 5.7 12.3 6.6 11.6 10.1 5.8 10.6 5 11.1 4.3 11.4 3.5 11.8 2.7 11.9 2.4 10.9 .7 11-.4 10.7-1.3 10.6-2.3 10.3-3.3 10-4.1 9.4-5 0-22.7-10.7 3.9-11.9 1.1-12.3-1.9-12.2-4.8-11.6-7.6-10.3-10.1-8.6-12.4-6.4-14-4-15.3-1.4-15.9 1.4-15.9 4-15.3 6.4-14.1 8.6-12.4 10.3-10.1 11.6-7.6 12.2-4.8 12.3-1.8 11.9 1 10.7 3.9 0-11.3zM1014.6 559.6l0-87.6 19.1 0 7.1 .2 7.2 .9 6.9 2.1 6.5 3.2 5.9 4.1 5.1 5.1 4.2 5.9 3.2 6.5 2.1 6.9 .9 7.2-.3 7.2-1.5 7.1-2.6 6.7-3.8 6.2-4.7 5.5-2.1 2-2.3 1.8-2.3 1.7-2.5 1.6-2.6 1.3-3.7 1.6-3.7 1.2-3.9 .9-3.2 .5-4.1 .2-23.4 0z"/>
<path stroke="#4cda85" stroke-width="1.16" d="M1138.7 414l-9.6-4.9-9.9-4-10.4-3.1-10.6-2.2-10.8-1.3-10.9-.3-10.9 .3-12.1 1.9-11.8 2.8-11.6 3.6-11.1 4.5-10.7 5.2-10.1 6-6.8 11.5-6 12.3-5.1 12.8-4.1 13.4-2.9 13.8-1.8 14.1-.6 14.3 .6 14.2 1.8 14.1 2.9 13.9 4.1 13.3 5.1 12.9 6 12.2 6.8 11.5 10.1 6 10.7 5.3 11.1 4.4 11.6 3.7 11.8 2.8 12.1 2.4 10.9 .7 10.9-.3 10.8-1.2 10.6-2.3 10.4-3.1 9.9-4 9.6-4.9 0-23.6-11.4 4.3-12.4 1.3-13-1.7-12.8-4.8-12.1-7.6-10.8-10.3-9-12.5-6.7-14.4-4.2-15.6-1.4-16.2 1.4-16.3 4.2-15.6 6.7-14.4 9-12.5 10.8-10.3 12.1-7.6 12.8-4.7 13-1.8 12.4 1.4 11.4 4.2 0-11.8zM1025.2 556.3l0-81.4 17.8 0 6.5 .2 6.7 .9 6.4 1.9 6.1 3 5.4 3.8 4.8 4.8 3.9 5.4 3 6.1 1.9 6.4 .8 6.6-.2 6.8-1.4 6.5-2.5 6.3-3.5 5.7-4.3 5.1-2 1.9-2.1 1.7-2.2 1.5-2.3 1.5-2.4 1.2-3.4 1.5-3.5 1.1-3.6 .8-4.3 .6-24.2 .1z"/>
<path stroke="#4dda82" stroke-width="1.16" d="M1147.7 412.4l-9.6-4.7-10-3.9-10.4-3.1-10.6-2.1-10.8-1.2-10.9-.2-10.9 .3-12.2 2-12 2.9-11.6 3.8-11.2 4.6-10.8 5.4-10.1 6.3-7.1 11.4-6.2 12.2-5.3 12.8-4.2 13.4-3.1 13.8-1.8 14.1-.7 14.3 .7 14.3 1.8 14.1 3.1 13.8 4.2 13.4 5.3 12.9 6.2 12.1 7.1 11.5 10.1 6.2 10.8 5.4 11.2 4.7 11.6 3.7 12 2.9 12.2 2.5 10.9 .7 10.9-.2 10.8-1.2 10.6-2.1 10.4-3 10-3.9 9.6-4.8 0-24.4-11.9 4.5-13.1 1.6-13.5-1.5-13.4-4.7-12.7-7.7-11.2-10.4-9.4-12.8-7.1-14.6-4.3-15.9-1.5-16.6 1.5-16.6 4.3-16 7.1-14.6 9.4-12.8 11.2-10.4 12.7-7.7 13.4-4.6 13.5-1.6 13.1 1.6 11.9 4.6 0-12.3zM1035.8 553l0-75.1 16.4 0 6.1 .2 6.1 .8 5.9 1.7 5.6 2.8 5.1 3.5 4.4 4.4 3.6 5.1 2.7 5.5 1.8 5.9 .8 6.2-.3 6.2-1.3 6.1-2.3 5.7-3.1 5.3-4.1 4.7-1.8 1.7-1.9 1.6-2.1 1.5-2.1 1.3-2.2 1.1-3.1 1.4-3.3 1-3.3 .8-3.9 .5-22.4 .1z"/>
<path stroke="#4fda80" stroke-width="1.16" d="M1156.8 410.8l-9.7-4.6-10.1-3.8-10.4-2.9-10.6-2.1-10.8-1.1-10.9-.1-10.9 .4-12.4 2-12 3-11.7 3.9-11.4 4.8-10.7 5.7-10.2 6.4-7.4 11.4-6.4 12.1-5.5 12.8-4.4 13.4-3.1 13.8-2 14.2-.6 14.3 .6 14.3 2 14.1 3.1 13.8 4.4 13.4 5.5 12.8 6.4 12.2 7.4 11.3 10.2 6.5 10.7 5.6 11.4 4.8 11.7 3.9 12 3 12.4 2.5 10.9 .8 10.9-.2 10.8-1.1 10.6-2 10.4-2.9 10.1-3.8 9.7-4.7 0-25.3-12.5 4.9-13.7 1.9-14.2-1.4-14-4.7-13.1-7.7-11.8-10.5-9.8-13-7.3-14.9-4.6-16.3-1.5-16.9 1.5-17 4.6-16.2 7.3-15 9.8-12.9 11.8-10.6 13.1-7.7 14-4.6 14.2-1.4 13.7 1.8 12.5 5 0-12.7zM1046.4 549.7l0-68.9 15 0 5.6 .2 5.6 .7 5.5 1.7 5.1 2.5 4.6 3.3 4 4 3.3 4.6 2.6 5.1 1.6 5.4 .7 5.6-.2 5.7-1.2 5.6-2.1 5.3-2.9 4.8-3.7 4.4-1.7 1.5-1.8 1.5-1.9 1.3-1.9 1.2-2 1-2.9 1.3-2.9 .9-3.1 .7-3.6 .5-20.5 .1z"/>
<path stroke="#50db7e" stroke-width="1.15" d="M1165.8 409.2l-9.7-4.5-10.1-3.7-10.5-2.8-10.6-2-10.9-1-10.9-.1-10.9 .5-12.4 2.2-12.2 3.1-11.8 4-11.4 5-10.8 5.8-10.2 6.7-7.7 11.2-6.6 12.1-5.7 12.8-4.5 13.4-3.3 13.8-2 14.2-.7 14.3 .7 14.3 2 14.2 3.3 13.8 4.5 13.4 5.7 12.8 6.6 12.1 7.7 11.2 10.2 6.7 10.8 5.8 11.4 5 11.8 4 12.2 3.1 12.4 2.6 10.9 .8 10.9-.1 10.9-1 10.6-1.9 10.5-2.9 10.1-3.7 9.7-4.5 0-26.2-13.1 5.3-14.2 2.1-14.8-1.2-14.6-4.6-13.7-7.8-12.3-10.7-10.1-13.1-7.7-15.2-4.7-16.6-1.6-17.3 1.6-17.3 4.7-16.6 7.7-15.2 10.1-13.2 12.3-10.7 13.7-7.7 14.6-4.6 14.8-1.2 14.2 2.1 13.1 5.2 0-13.1zM1057 546.4l0-62.6 13.7 0 5 .2 5.1 .6 5 1.5 4.6 2.3 4.2 3 3.7 3.6 3 4.2 2.3 4.6 1.5 5 .6 5.1-.2 5.2-1.1 5-1.9 4.8-2.6 4.4-3.4 4-1.5 1.4-1.6 1.3-1.7 1.2-1.8 1.1-3.1 1.5-2.7 1-2.7 .8-3.7 .6-19.6 .2z"/>
<path stroke="#51dc7b" stroke-width="1.15" d="M1174.9 407.7l-9.8-4.5-10.2-3.6-10.5-2.7-10.7-1.8-10.8-1-10.9 0-10.9 .6-12.5 2.2-12.3 3.2-11.9 4.2-11.5 5.1-10.9 6-10.3 6.9-7.8 11.2-6.9 12-5.9 12.8-4.6 13.4-3.4 13.8-2.1 14.2-.7 14.3 .7 14.4 2.1 14.2 3.4 13.8 4.6 13.4 5.9 12.8 6.9 12 7.8 11.2 10.3 6.9 10.9 6 11.5 5.1 11.9 4.2 12.3 3.2 12.5 2.6 10.9 .9 10.9-.1 10.8-.9 10.7-1.9 10.5-2.7 10.2-3.6 9.8-4.4 0-27.1-13.7 5.7-14.9 2.3-15.4-1-15.1-4.6-14.3-7.8-12.7-10.8-10.6-13.4-7.9-15.5-4.9-16.9-1.7-17.6 1.7-17.7 4.9-16.9 7.9-15.4 10.6-13.5 12.7-10.8 14.3-7.8 15.1-4.5 15.4-1.1 14.9 2.4 13.7 5.6 0-13.5zM1067.6 543.1l0-56.3 12.3 0 4.5 .1 4.7 .6 4.4 1.3 4.2 2.1 3.8 2.7 3.3 3.2 2.7 3.8 2 4.2 1.4 4.4 .5 4.6-.1 4.7-1 4.5-1.7 4.4-2.4 3.9-3 3.6-1.4 1.3-1.5 1.1-1.5 1.1-1.6 1-2.8 1.4-2.4 .9-2.4 .7-3.4 .6-17.6 .1z"/>
<path stroke="#53dc79" stroke-width="1.15" d="M1183.9 406.1l-9.8-4.3-10.3-3.5-10.5-2.7-10.7-1.7-10.8-.9-10.9 .1-10.9 .6-12.7 2.3-12.3 3.3-12.1 4.3-11.5 5.3-11 6.2-10.3 7.1-8.1 11.2-7.1 11.9-6.1 12.8-4.8 13.3-3.5 13.9-2.1 14.2-.7 14.4 .7 14.4 2.1 14.2 3.5 13.8 4.8 13.4 6.1 12.7 7.1 12 8.1 11.1 10.3 7.1 11 6.2 11.5 5.3 12.1 4.3 12.3 3.3 12.7 2.6 10.9 1 10.9 0 10.8-.8 10.7-1.8 10.5-2.6 10.3-3.5 9.8-4.3 0-27.9-14.2 6-15.5 2.6-16-.9-15.8-4.5-14.8-7.9-13.2-10.9-11-13.6-8.2-15.8-5.1-17.2-1.7-18 1.7-18 5.1-17.2 8.2-15.8 11-13.6 13.2-11 14.8-7.8 15.8-4.5 16-.9 15.5 2.6 14.2 6 0-14zM1078.2 539.8l0-50.1 10.9 0 4.1 .1 4.1 .6 3.9 1.2 3.7 1.8 3.4 2.4 2.9 2.9 2.5 3.3 1.8 3.7 1.2 4 .5 4.1-.2 4.1-.9 4.1-1.5 3.8-2.1 3.6-2.7 3.1-1.2 1.1-1.3 1.1-1.4 .9-1.4 .9-2.5 1.3-2.1 .8-2.2 .6-3.7 .5-14.9 .1z"/>
<path stroke="#54dc76" stroke-width="1.14" d="M1193 404.5l-10-4.2-10.2-3.4-10.6-2.5-10.7-1.7-10.9-.8-10.9 .1-10.9 .8-12.7 2.3-12.5 3.5-12.1 4.4-11.6 5.4-11.1 6.5-10.3 7.3-8.4 11-7.3 12-6.2 12.7-5 13.3-3.6 13.9-2.2 14.2-.8 14.4 .8 14.4 2.2 14.2 3.6 13.9 5 13.4 6.2 12.7 7.3 11.9 8.4 11 10.3 7.4 11.1 6.4 11.6 5.4 12.1 4.5 12.5 3.4 12.7 2.6 10.9 1 10.9 .1 10.9-.7 10.7-1.7 10.6-2.5 10.2-3.4 10-4.2 0-28.8-14.9 6.3-16.1 2.9-16.6-.8-16.3-4.4-15.4-7.9-13.7-11.1-11.3-13.8-8.5-16-5.3-17.6-1.8-18.3 1.8-18.3 5.3-17.6 8.5-16 11.3-13.9 13.7-11.1 15.4-7.9 16.3-4.4 16.6-.7 16.1 2.8 14.9 6.4 0-14.4zM1088.8 536.5l0-43.8 9.6 0 3.5 .1 3.6 .5 3.5 1 3.2 1.6 2.9 2.1 2.6 2.5 2.1 3 1.6 3.2 1.1 3.5 .4 3.5-.1 3.7-.8 3.5-1.3 3.4-1.9 3.1-2.3 2.7-2.2 1.9-2.5 1.6-2.2 1.1-2.8 1-3.5 .7-13.7 .1z"/>
<path stroke="#56dd74" stroke-width="1.14" d="M1202 402.9l-10-4.1-10.3-3.3-10.6-2.4-10.7-1.6-10.9-.7-10.9 .2-10.9 .8-12.8 2.5-12.6 3.5-12.2 4.6-11.7 5.6-11.1 6.6-10.4 7.5-8.7 11-7.5 11.9-6.4 12.7-5.1 13.3-3.8 13.9-2.2 14.2-.8 14.5 .8 14.4 2.2 14.2 3.8 13.9 5.1 13.4 6.4 12.6 7.5 11.9 8.7 11 10.4 7.5 11.1 6.6 11.7 5.7 12.2 4.5 12.6 3.5 12.8 2.7 10.9 1.1 10.9 .1 10.9-.7 10.7-1.5 10.6-2.5 10.3-3.2 10-4.1 0-29.7-15.4 6.7-16.7 3.1-17.2-.6-17-4.3-15.9-8-14.1-11.2-11.8-14-8.8-16.4-5.5-17.8-1.8-18.7 1.8-18.7 5.5-17.9 8.8-16.3 11.8-14 14.1-11.3 15.9-7.9 17-4.4 17.2-.6 16.7 3.2 15.4 6.7 0-14.9zM1099.4 533.2l0-37.6 8.2 0 3 .1 3.1 .4 3 .9 2.8 1.4 2.5 1.8 2.2 2.2 1.8 2.5 1.4 2.8 .8 2.9 .4 3.1-.1 3.1-.6 3-1.2 2.9-1.6 2.7-2 2.3-1.9 1.7-2.1 1.3-2.6 1.3-2.5 .7-3.3 .5-10.7 0z"/>
<path stroke="#57de72" stroke-width="1.14" d="M1211.1 401.3l-10.1-4-10.4-3.1-10.6-2.4-10.7-1.5-10.9-.6-10.9 .3-10.9 .9-13 2.5-12.7 3.6-12.3 4.7-11.8 5.8-11.1 6.8-10.5 7.8-8.8 10.9-7.8 11.8-6.6 12.7-5.3 13.3-3.8 13.9-2.3 14.2-.8 14.5 .8 14.5 2.3 14.2 3.8 13.9 5.3 13.3 6.6 12.7 7.8 11.8 8.8 10.9 10.5 7.8 11.1 6.8 11.8 5.8 12.3 4.7 12.7 3.6 13 2.7 10.9 1.1 10.9 .3 10.9-.7 10.7-1.5 10.6-2.3 10.4-3.2 10.1-3.9 0-30.6-16 7.1-17.3 3.4-17.9-.5-17.5-4.3-16.5-7.9-14.6-11.4-12.1-14.3-9.1-16.6-5.7-18.2-1.9-19 1.9-19 5.7-18.2 9.1-16.6 12.1-14.3 14.6-11.4 16.5-8 17.5-4.3 17.9-.4 17.3 3.4 16 7.1 0-15.3zM1110 529.9l0-31.3 6.8 0 2.6 .1 2.5 .3 2.5 .7 2.3 1.2 2.1 1.5 1.9 1.8 1.5 2.1 1.1 2.3 .7 2.5 .4 2.5-.1 2.6-.6 2.6-.9 2.4-1.4 2.2-1.6 1.9-1.6 1.4-1.7 1.1-2.3 1.1-2.7 .7-11 .3z"/>
<path stroke="#58de6f" stroke-width="1.13" d="M1220.1 399.7l-10.1-3.9-10.4-3-10.7-2.2-10.8-1.4-10.9-.6-10.9 .3-10.8 1-13.1 2.6-12.8 3.8-12.4 4.8-11.9 5.9-11.2 7-10.5 8-9.1 10.8-8 11.8-6.8 12.6-5.4 13.4-4 13.9-2.3 14.3-.9 14.4 .9 14.5 2.3 14.3 4 13.9 5.4 13.3 6.8 12.7 8 11.7 9.1 10.9 10.5 8 11.2 6.9 11.9 6 12.4 4.8 12.8 3.8 13.1 2.7 10.8 1.2 10.9 .3 10.9-.6 10.8-1.4 10.7-2.2 10.4-3.1 10.1-3.8 0-31.5-16.6 7.5-17.9 3.6-18.4-.3-18.1-4.2-17-8-15.2-11.6-12.5-14.4-9.4-16.9-5.8-18.5-2-19.4 2-19.4 5.8-18.5 9.4-16.9 12.5-14.5 15.2-11.5 17-8 18.1-4.3 18.4-.2 17.9 3.6 16.6 7.4 0-15.7zM1120.6 526.6l0-25 7.5 0 2 .3 2 .6 1.9 .9 1.7 1.2 1.4 1.4 1.2 1.7 .9 1.9 .6 1.9 .3 2.1-.1 2.1-.4 2-.8 1.9-1 1.8-1.4 1.5-1.2 1.1-1.4 1-2.3 1-3.4 .6-7.1 0z"/>
<path stroke="#5ade6d" stroke-width="1.13" d="M1229.2 398.1l-10.2-3.7-10.5-3-10.7-2.1-10.8-1.3-10.9-.5-10.9 .4-10.9 1.1-13.2 2.6-12.9 3.9-12.5 5-11.9 6.1-11.3 7.1-10.5 8.3-9.4 10.7-8.2 11.7-7 12.6-5.5 13.4-4.1 13.9-2.5 14.3-.8 14.5 .8 14.5 2.5 14.3 4.1 13.9 5.5 13.3 7 12.6 8.2 11.7 9.4 10.8 10.5 8.2 11.3 7.2 11.9 6.1 12.5 5 12.9 3.8 13.2 2.8 10.9 1.2 10.9 .4 10.9-.5 10.8-1.3 10.7-2.1 10.5-3 10.2-3.7 0-32.3-17.2 7.7-18.5 4-19.1-.2-18.7-4.2-17.5-8-15.6-11.7-13-14.7-9.7-17.1-6-18.9-2-19.7 2-19.7 6-18.9 9.7-17.1 13-14.7 15.6-11.7 17.5-8.1 18.7-4.1 19.1-.2 18.5 3.9 17.2 7.8 0-16.1zM1131.2 523.3l0-18.8 5.6 .1 1.6 .2 1.4 .4 1.4 .7 1.3 .9 1.1 1.1 .9 1.2 .7 1.4 .4 1.5 .2 1.5 0 1.6-.4 1.5-.5 1.5-.8 1.3-1 1.2-1.5 1.1-2.3 1.1-7.8 .5z"/>
<path stroke="#5bdf6b" stroke-width="1.13" d="M1238.2 396.5l-10.2-3.6-10.6-2.8-10.7-2.1-10.8-1.2-10.9-.4-10.9 .5-10.9 1.1-13.3 2.8-13 3.9-12.6 5.1-12 6.3-11.4 7.4-10.5 8.4-9.7 10.7-8.4 11.7-7.2 12.5-5.7 13.4-4.1 13.9-2.6 14.3-.8 14.5 .8 14.5 2.6 14.4 4.1 13.9 5.7 13.3 7.2 12.6 8.4 11.7 9.7 10.6 10.5 8.5 11.4 7.3 12 6.3 12.6 5.1 13 4 13.3 2.8 10.9 1.2 10.9 .5 10.9-.4 10.8-1.2 10.7-2.1 10.6-2.8 10.2-3.6 0-33.2-17.7 8.1-19.2 4.2-19.6 0-19.3-4.1-18.1-8.1-16.1-11.8-13.3-14.9-10-17.5-6.2-19.1-2.1-20.1 2.1-20.1 6.2-19.1 10-17.5 13.3-14.9 16.1-11.8 18.1-8.1 19.3-4.1 19.6 0 19.2 4.2 17.7 8.1 0-16.6zM1141.8 520l0-12.5 3.7 0 1.1 .1 1 .3 .9 .5 .8 .6 .8 .7 .6 .9 .4 .9 .3 1 .1 1 0 1-.2 1-.4 1-.5 .9-1.3 1.3-2.1 1.1-5 .2z"/>
<path stroke="#5de068" stroke-width="1.12" d="M1247.3 394.9l-10.4-3.5-10.5-2.7-10.8-1.9-10.8-1.2-10.9-.3-11 .5-10.8 1.3-13.4 2.8-13.2 4-12.6 5.3-12.1 6.4-11.5 7.6-10.5 8.7-9.9 10.6-8.7 11.6-7.4 12.5-5.8 13.3-4.3 14-2.6 14.3-.9 14.6 .9 14.5 2.6 14.4 4.3 13.9 5.8 13.3 7.4 12.5 8.7 11.7 9.9 10.6 10.5 8.6 11.5 7.6 12.1 6.4 12.6 5.3 13.2 4 13.4 2.9 10.8 1.3 11 .5 10.9-.3 10.8-1.2 10.8-1.9 10.5-2.7 10.4-3.5 0-34.1-18.4 8.5-19.7 4.4-20.3 .2-19.9-4.1-18.6-8.1-16.6-11.9-13.7-15.2-10.3-17.7-6.3-19.5-2.2-20.4 2.2-20.4 6.3-19.5 10.3-17.7 13.7-15.2 16.6-11.9 18.6-8.1 19.9-4.1 20.3 .2 19.7 4.4 18.4 8.5 0-17zM1152.4 516.7l0-6.3 2.4 .1 .9 .4 .8 .7 .6 .8 .2 1-.2 1.1-.4 .9-2 1.2-2.2 .1z"/>
<path stroke="#5ee066" stroke-width="1.12" d="M1256.3 393.3l-10.4-3.4-10.6-2.6-10.8-1.8-10.8-1-11-.3-10.9 .6-10.8 1.4-13.6 2.8-13.2 4.2-12.8 5.4-12.2 6.5-11.4 7.8-10.7 8.9-10.1 10.5-8.9 11.6-7.5 12.5-6.1 13.3-4.3 14-2.7 14.3-.9 14.6 .9 14.6 2.7 14.3 4.3 14 6.1 13.3 7.5 12.5 8.9 11.6 10.1 10.5 10.7 8.9 11.4 7.8 12.2 6.5 12.8 5.4 13.2 4.2 13.6 2.8 10.8 1.4 10.9 .6 11-.3 10.8-1 10.8-1.8 10.6-2.6 10.4-3.4 0-35-18.9 8.9-20.3 4.7-20.9 .3-20.5-4-19.2-8.2-17-12.1-14.1-15.3-10.6-18-6.6-19.8-2.2-20.8 2.2-20.8 6.6-19.8 10.6-18 14.1-15.3 17-12.1 19.2-8.2 20.5-4 20.9 .3 20.3 4.7 18.9 8.9 0-17.5z"/>
</g>
<g fill="none" stroke="#5870cc" stroke-width="1">
<rect x="360.500" y="355.500" width="914" height="374"/>
<path d="M478 513.500L825 520.500L1163 513.500"/>
<path d="M362 637.500H592M700 645.500H951M1052 637.500H1274"/>
<path d="M1277 542H1288"/>
<circle cx="1292" cy="542" r="3.600" fill="#fff"/>
<g fill="#fff">
<rect x="357.500" y="352.500" width="5" height="5"/><rect x="814.500" y="352.500" width="5" height="5"/><rect x="1271.500" y="352.500" width="5" height="5"/>
<rect x="357.500" y="539.500" width="5" height="5"/><rect x="1271.500" y="539.500" width="5" height="5"/>
<rect x="357.500" y="726.500" width="5" height="5"/><rect x="814.500" y="726.500" width="5" height="5"/><rect x="1271.500" y="726.500" width="5" height="5"/>
</g>
<g fill="#5870cc" stroke="none"><rect x="358.500" y="635.500" width="4" height="4"/><rect x="698" y="643.500" width="4" height="4"/><rect x="1050" y="635.500" width="4" height="4"/></g>
</g>
<path d="M1150.200 530.600L1158.400 544.600L1154.600 542.400L1201.900 801L1201.100 801.200L1150.500 543.200L1147.700 546.600z" fill="#e0161f"/>
</svg>
<!-- ===== floating align panel ===== -->
<div class="a" style="left:1227px;top:147px;width:233px;height:146px;background:#535353;border:1px solid #3a3a3a;box-shadow:0 1px 3px rgba(0,0,0,.35)"></div>
<div class="a" style="left:1228px;top:148px;width:231px;height:30px;background:#434343;border-bottom:1px solid #3e3e3e"></div>
<div class="a" style="left:1228px;top:148px;width:49px;height:30px;background:#535353;border-right:1px solid #3e3e3e"></div>
<div class="a" style="left:1277px;top:148px;width:79px;height:29px;background:#484848;border-right:1px solid #3e3e3e"></div>
<svg style="left:1232px;top:159px" width="8" height="12"><path d="M1 4.500L4 1.500L7 4.500M1 7.500L4 10.500L7 7.500" fill="none" stroke="#d8d8d8" stroke-width="1.200"/></svg>
<div class="t" style="left:1245px;top:159px;font-size:12px;color:#f2f2f2">对齐</div>
<div class="t" style="left:1287px;top:159px;font-size:12px;color:#b4b4b4">路径查找器</div>
<svg style="left:1417px;top:160px" width="12" height="10"><path d="M1.500 1.500L5 5L1.500 8.500M6.500 1.500L10 5L6.500 8.500" fill="none" stroke="#e0e0e0" stroke-width="1.300"/></svg>
<div class="a" style="left:1435px;top:158px;width:1px;height:13px;background:#8a8a8a"></div>
<svg style="left:1442px;top:160px" width="12" height="10"><path d="M0 1.500h11M0 4.500h11M0 7.500h11" stroke="#d0d0d0" stroke-width="1.200"/></svg>
<div class="t pl" style="left:1234px;top:186px">对齐对象 :</div>
<div class="a" style="left:1234px;top:235px;width:219px;height:1px;background:#474747"></div>
<div class="t pl" style="left:1234px;top:243px">分布对象 :</div>
<style>.pl{font-size:12px;color:#d4d4d4;font-family:"Liberation Sans","Noto Sans CJK SC",sans-serif;letter-spacing:.6px}</style>
<svg style="left:0;top:0" width="1751" height="959" viewBox="0 0 1751 959">
<rect x="1239.0" y="206.8" width="1" height="18.4" fill="#dcdcdc"/>
<rect x="1240.9" y="209.8" width="8.3" height="4.5" fill="#cdcdcd"/>
<rect x="1240.9" y="217.1" width="13.4" height="5.0" fill="#cdcdcd"/>
<rect x="1282.1" y="206.8" width="1" height="18.4" fill="#dcdcdc"/>
<rect x="1278.1" y="209.8" width="9.0" height="4.5" fill="#cdcdcd"/>
<rect x="1275.9" y="217.1" width="13.4" height="5.0" fill="#cdcdcd"/>
<rect x="1325.8" y="206.8" width="1" height="18.4" fill="#dcdcdc"/>
<rect x="1317.3" y="209.8" width="7.8" height="4.5" fill="#cdcdcd"/>
<rect x="1311.8" y="217.1" width="13.4" height="5.0" fill="#cdcdcd"/>
<rect x="1359.9" y="207.9" width="18.4" height="1" fill="#dcdcdc"/>
<rect x="1363.2" y="210.1" width="4.8" height="12.9" fill="#cdcdcd"/>
<rect x="1370.7" y="210.1" width="5.7" height="7.8" fill="#cdcdcd"/>
<rect x="1396.1" y="215.4" width="17.9" height="1" fill="#dcdcdc"/>
<rect x="1398.6" y="209.3" width="5.0" height="12.9" fill="#cdcdcd"/>
<rect x="1406.4" y="211.4" width="5.5" height="8.3" fill="#cdcdcd"/>
<rect x="1431.9" y="222.4" width="18.4" height="1" fill="#dcdcdc"/>
<rect x="1435.3" y="209.3" width="4.5" height="12.5" fill="#cdcdcd"/>
<rect x="1442.5" y="213.8" width="5.3" height="8.0" fill="#cdcdcd"/>
<rect x="1237.5" y="264.7" width="18.4" height="1" fill="#dcdcdc"/>
<rect x="1237.5" y="273.8" width="18.4" height="1" fill="#dcdcdc"/>
<rect x="1242.9" y="266.3" width="8.0" height="4.7" fill="#cdcdcd"/>
<rect x="1240.9" y="275.5" width="12.0" height="5.2" fill="#cdcdcd"/>
<rect x="1274.2" y="268.0" width="17.9" height="1" fill="#dcdcdc"/>
<rect x="1274.2" y="277.2" width="17.9" height="1" fill="#dcdcdc"/>
<rect x="1279.2" y="266.3" width="7.8" height="4.3" fill="#cdcdcd"/>
<rect x="1277.2" y="275.5" width="12.0" height="4.3" fill="#cdcdcd"/>
<rect x="1309.6" y="270.8" width="18.4" height="1" fill="#dcdcdc"/>
<rect x="1309.6" y="280.2" width="18.4" height="1" fill="#dcdcdc"/>
<rect x="1315.1" y="265.2" width="7.8" height="5.0" fill="#cdcdcd"/>
<rect x="1313.1" y="274.3" width="12.0" height="5.2" fill="#cdcdcd"/>
<rect x="1360.9" y="264.3" width="1" height="17.5" fill="#dcdcdc"/>
<rect x="1370.5" y="264.3" width="1" height="17.5" fill="#dcdcdc"/>
<rect x="1362.7" y="267.2" width="5.3" height="11.7" fill="#cdcdcd"/>
<rect x="1372.2" y="269.0" width="4.7" height="8.2" fill="#cdcdcd"/>
<rect x="1399.7" y="264.3" width="1" height="17.5" fill="#dcdcdc"/>
<rect x="1408.9" y="264.3" width="1" height="17.5" fill="#dcdcdc"/>
<rect x="1398.1" y="267.2" width="4.3" height="11.7" fill="#cdcdcd"/>
<rect x="1407.4" y="269.3" width="4.5" height="7.8" fill="#cdcdcd"/>
<rect x="1440.6" y="264.3" width="1" height="17.5" fill="#dcdcdc"/>
<rect x="1448.1" y="264.3" width="1" height="17.5" fill="#dcdcdc"/>
<rect x="1433.1" y="267.2" width="4.7" height="11.7" fill="#cdcdcd"/>
<rect x="1442.8" y="269.3" width="4.2" height="7.5" fill="#cdcdcd"/>
</svg>
<!-- ===== right icon strip ===== -->
<svg style="left:0;top:0" width="1751" height="959" viewBox="0 0 1751 959">
<defs><linearGradient id="gq" x1="0" y1="1" x2="1" y2="0"><stop offset="0" stop-color="#666"/><stop offset="1" stop-color="#d8d8d8"/></linearGradient><linearGradient id="gth" x1="0" x2="1"><stop offset="0" stop-color="#1f49d0"/><stop offset=".5" stop-color="#22bfc4"/><stop offset="1" stop-color="#55dc6c"/></linearGradient><linearGradient id="gwb" x1="0" x2="1"><stop offset="0" stop-color="#fff"/><stop offset="1" stop-color="#1a1a1a"/></linearGradient><linearGradient id="gyo" x1="0" x2="1"><stop offset="0" stop-color="#ffe600"/><stop offset="1" stop-color="#f0641e"/></linearGradient><linearGradient id="gbl" x1="0" x2="1"><stop offset="0" stop-color="#1e8fe0"/><stop offset="1" stop-color="#d8ecf8"/></linearGradient><radialGradient id="gpt"><stop offset="0" stop-color="#fff"/><stop offset=".62" stop-color="#fff"/><stop offset=".8" stop-color="#111"/></radialGradient><linearGradient id="hue" x1="0" x2="1"><stop offset="0" stop-color="#f00"/><stop offset=".167" stop-color="#ff0"/><stop offset=".333" stop-color="#0f0"/><stop offset=".5" stop-color="#0ff"/><stop offset=".667" stop-color="#00f"/><stop offset=".833" stop-color="#f0f"/><stop offset="1" stop-color="#f00"/></linearGradient><linearGradient id="wht" x1="0" y1="0" x2="0" y2="1"><stop offset="0" stop-color="#fff"/><stop offset=".5" stop-color="#fff" stop-opacity="0"/></linearGradient><linearGradient id="blk" x1="0" y1="0" x2="0" y2="1"><stop offset=".5" stop-color="#000" stop-opacity="0"/><stop offset="1" stop-color="#000"/></linearGradient><g id="mn"><path d="M0 .5h10.500M0 2.700h10.500M0 4.900h10.500M0 7.100h10.500" stroke="#cfcfcf" stroke-width="1"/></g><g id="eye"><path d="M0 4.500Q6.500 -2 13 4.500Q6.500 11 0 4.500z" fill="#d0d0d0"/><circle cx="6.500" cy="4.500" r="2.600" fill="#535353"/><circle cx="6.500" cy="4.500" r="1.200" fill="#d0d0d0"/></g><g id="ud"><path d="M1 4.500L4 1.500L7 4.500M1 7.500L4 10.500L7 7.500" fill="none" stroke="#d8d8d8" stroke-width="1.200"/></g><g id="fs"><rect x=".5" y=".5" width="18" height="18" fill="#fff" stroke="#3a3a3a"/><path d="M1.200 17.800L17.800 1.200" stroke="#d8101c" stroke-width="1.700"/><rect x="10.500" y="10.500" width="18" height="18" fill="#535353" stroke="#2e2e2e"/><rect x="15" y="15" width="9" height="9" fill="#535353" stroke="#2e2e2e"/></g><g id="fold"><path d="M0 3h4v-1.500H0z" fill="#e6e6e6"/><rect x="0" y="3.500" width="11" height="7.500" fill="#cfcfcf"/></g></defs>
<rect x="1461" y="147.5" width="37" height="2" fill="#404040"/>
<rect x="1461" y="216.5" width="37" height="2" fill="#404040"/>
<rect x="1461" y="285.5" width="37" height="2" fill="#404040"/>
<rect x="1461" y="354.5" width="37" height="2" fill="#404040"/>
<rect x="1461" y="395.5" width="37" height="2" fill="#404040"/>
<rect x="1461" y="436.5" width="37" height="2" fill="#404040"/>
<rect x="1470" y="84" width="20" height="4" fill="url(#grip)"/>
<rect x="1470" y="152" width="20" height="4" fill="url(#grip)"/>
<rect x="1470" y="221" width="20" height="4" fill="url(#grip)"/>
<rect x="1470" y="290" width="20" height="4" fill="url(#grip)"/>
<rect x="1470" y="360" width="20" height="4" fill="url(#grip)"/>
<rect x="1470" y="400" width="20" height="4" fill="url(#grip)"/>
<defs><pattern id="grip" width="2" height="4" patternUnits="userSpaceOnUse"><rect width="1" height="4" fill="#3b3b3b"/></pattern></defs>
<circle cx="1480.500" cy="104.500" r="5.800" fill="#cfcfcf"/><circle cx="1480.500" cy="104.500" r="8" fill="none" stroke="#cfcfcf" stroke-width="1.600" stroke-dasharray="2 1.600"/>
<path d="M1473.500 140.500V124.500A16 16 0 0 1 1489 140.500z" fill="url(#gq)" stroke="#d6d6d6" stroke-width="1"/>
<rect x="1466" y="162" width="26" height="22" rx="2" fill="#2e2e2e"/>
<rect x="1472" y="164.500" width="1.300" height="17" fill="#e0e0e0"/><rect x="1474.500" y="166" width="8" height="5.500" fill="#cfcfcf"/><rect x="1474.500" y="174" width="14" height="5.500" fill="#cfcfcf"/>
<rect x="1473" y="193.500" width="9" height="9" fill="#cfcfcf"/><rect x="1478.500" y="199" width="9.500" height="9.500" fill="#cfcfcf" stroke="#535353" stroke-width="1"/><rect x="1478.500" y="199" width="3.500" height="3.500" fill="#535353"/>
<path transform="translate(0 -6)" d="M1475 249h11l-1 9h-9zM1476 248q-3-6 0-9q2 3 2 9zM1479.500 248v-10q3-1 3 1v9zM1484 248q0-6 4-8q2 2-1 8z" fill="#d2d2d2"/>
<circle cx="1480.500" cy="265.500" r="4.300" fill="#d2d2d2"/><circle cx="1476" cy="271.500" r="4.300" fill="#d2d2d2"/><circle cx="1485" cy="271.500" r="4.300" fill="#d2d2d2"/><path d="M1479.500 270h2l1.500 8.500h-5z" fill="#d2d2d2"/>
<g fill="none" stroke="#d2d2d2" stroke-width="1.200"><rect x="1472.500" y="311.500" width="6" height="6"/><rect x="1475.500" y="314.500" width="6" height="6"/></g>
<g fill="none" stroke="#d2d2d2" stroke-width="1.200"><rect x="1472.500" y="339.500" width="6" height="6"/><rect x="1475.500" y="342.500" width="6" height="6"/></g>
<path d="M1484 331.500h5v15h-1.500v-13.500h-1.500v9h-1.500v-4.500a3 3 0 0 1-.5-6z" fill="#d2d2d2"/>
<path d="M1480 414.500h-6.500v15.500h15.500v-6.500" fill="none" stroke="#d2d2d2" stroke-width="1.800"/><path d="M1479 423.500L1489 413.500M1482.500 413h7v7" fill="none" stroke="#d2d2d2" stroke-width="1.800"/>
</svg>
<div class="t" style="left:1479px;top:299px;font-size:15px;font-weight:bold;color:#d6d6d6">A</div>
<div class="t" style="left:1471px;top:370px;font-size:21px;font-style:italic;font-weight:bold;color:#d6d6d6;font-family:'Liberation Serif',serif">A</div>
<div class="a" style="left:1501px;top:80px;width:245px;height:27px;background:#434343;border-bottom:1px solid #3d3d3d"></div>
<div class="a" style="left:1501px;top:80px;width:40px;height:26px;background:#4a4a4a;border-right:1px solid #3d3d3d"></div>
<div class="t" style="left:1511.5px;top:89px;font-size:12px;color:#b8b8b8">画板</div>
<div class="a" style="left:1541px;top:80px;width:45px;height:26px;background:#4a4a4a;border-right:1px solid #3d3d3d"></div>
<div class="t" style="left:1552px;top:89px;font-size:12px;color:#b8b8b8">链接</div>
<div class="a" style="left:1586px;top:80px;width:42px;height:27px;background:#535353;border-right:1px solid #3d3d3d"></div>
<div class="t" style="left:1596px;top:89px;font-size:12px;color:#f2f2f2">图层</div>
<svg style="left:1730px;top:89.5px" width="11" height="8"><use href="#mn"/></svg>
<div class="a" style="left:1506px;top:112px;width:235px;height:218px;border:1px solid #5d5d5d;border-top-color:#595959"></div>
<div class="a" style="left:1507px;top:135px;width:233px;height:1px;background:#5a5a5a"></div>
<div class="a" style="left:1507px;top:157px;width:233px;height:1px;background:#5a5a5a"></div>
<div class="a" style="left:1527px;top:113px;width:1px;height:44px;background:#5a5a5a"></div>
<div class="a" style="left:1704px;top:113px;width:1px;height:44px;background:#5a5a5a"></div>
<div class="a" style="left:1550px;top:113px;width:3px;height:44px;background:#5a7de6"></div>
<svg style="left:0;top:0" width="1751" height="959" viewBox="0 0 1751 959">
<use href="#eye" x="1510" y="119.500"/><use href="#eye" x="1510" y="141"/>
<path d="M1561.500 122.500L1565.500 126.500L1569.500 122.500" fill="none" stroke="#f0f0f0" stroke-width="1.600"/>
<path d="M1585 141.500L1589 145.700L1585 150" fill="none" stroke="#f0f0f0" stroke-width="1.600"/>
<rect x="1579.500" y="116.500" width="17" height="17" fill="#fff" stroke="#111" stroke-width="1"/><rect x="1581" y="122" width="14" height="5" fill="url(#gth)"/>
<rect x="1602.500" y="137.500" width="17" height="17" fill="#fff" stroke="#111" stroke-width="1"/><rect x="1604" y="143" width="14" height="5" fill="url(#gth)"/>
<circle cx="1715" cy="125.200" r="3.700" fill="none" stroke="#dcdcdc" stroke-width="1.200"/>
<circle cx="1715" cy="146.200" r="5.400" fill="none" stroke="#dcdcdc" stroke-width="1"/><circle cx="1715" cy="146.200" r="3.300" fill="#8c8c8c" stroke="#dcdcdc" stroke-width="1"/>
<rect x="1725.500" y="121.500" width="7.500" height="7.500" fill="#5b8af8" stroke="#111" stroke-width="1"/><rect x="1725.500" y="142.500" width="7.500" height="7.500" fill="#5b8af8" stroke="#111" stroke-width="1"/>
<path d="M1734 114.500h6v6z" fill="#e0e0e0"/>
<circle cx="1610.500" cy="337.500" r="4" fill="none" stroke="#d8d8d8" stroke-width="1.500"/><path d="M1607.500 341L1603.500 345.500" stroke="#d8d8d8" stroke-width="2"/>
<g fill="none" stroke="#6c6c6c" stroke-width="1"><rect x="1629.500" y="335.500" width="9" height="9"/><rect x="1632" y="338" width="4" height="4" fill="#6c6c6c"/><path d="M1654 340h5M1656.500 337.500v5M1661.500 335.500h6v9h-6z"/><path d="M1709.500 336.500h9M1710.500 337v8.500h7V337M1712.500 335h3M1713 338v6M1715.500 338v6"/></g>
<path d="M1682.500 334.500h10v10.500h-6l-4-4z" fill="#dcdcdc"/><path d="M1682.500 341h4v4" fill="none" stroke="#535353" stroke-width="1"/>
</svg>
<div class="t sl" style="left:1602px;top:120px"><b>图层</b> 1</div>
<div class="t sl" style="left:1625px;top:141px"><b>混合</b></div>
<div class="t sl" style="left:1506px;top:335px;color:#cfcfcf">1 <b>个图层</b></div>
<style>.sl{font-size:12px;color:#dedede;font-family:"Liberation Serif","Noto Sans CJK SC",serif;font-weight:bold;letter-spacing:.4px}.sl b{font-weight:500}</style>
<div class="a" style="left:1501px;top:350px;width:245px;height:3px;background:#3f3f3f"></div>
<div class="a" style="left:1501px;top:353px;width:245px;height:27px;background:#434343;border-bottom:1px solid #3d3d3d"></div>
<div class="a" style="left:1501px;top:353px;width:42px;height:26px;background:#4a4a4a;border-right:1px solid #3d3d3d"></div>
<div class="t" style="left:1511.5px;top:362px;font-size:12px;color:#b8b8b8">描边</div>
<div class="a" style="left:1543px;top:353px;width:42px;height:27px;background:#535353;border-right:1px solid #3d3d3d"></div>
<div class="t" style="left:1553.5px;top:362px;font-size:12px;color:#f2f2f2">色板</div>
<div class="a" style="left:1585px;top:353px;width:65px;height:26px;background:#4a4a4a;border-right:1px solid #3d3d3d"></div>
<div class="t" style="left:1595px;top:362px;font-size:12px;color:#b8b8b8">图形样式</div>
<svg style="left:1730px;top:362.5px" width="11" height="8"><use href="#mn"/></svg>
<div class="a" style="left:1506px;top:419px;width:235px;height:183px;border:1px solid #5b5b5b;border-top:0"></div>
<svg style="left:0;top:0" width="1751" height="959" viewBox="0 0 1751 959">
<use href="#fs" x="1506.500" y="386.500" transform="translate(0 0)"/>
<rect x="1692.500" y="386.500" width="48" height="23" rx="2" fill="none" stroke="#5e5e5e"/><rect x="1717" y="387" width="23" height="22" rx="2" fill="#2e2e2e"/>
<g fill="#d6d6d6"><rect x="1698" y="391" width="12" height="2.500"/><rect x="1698" y="394.800" width="12" height="2.500"/><rect x="1698" y="398.600" width="12" height="2.500"/><rect x="1698" y="402.400" width="12" height="2.500"/></g>
<g fill="#d6d6d6"><rect x="1722" y="391" width="4" height="4"/><rect x="1722" y="396.2" width="4" height="4"/><rect x="1722" y="401.4" width="4" height="4"/><rect x="1727.2" y="391" width="4" height="4"/><rect x="1727.2" y="396.2" width="4" height="4"/><rect x="1727.2" y="401.4" width="4" height="4"/><rect x="1732.4" y="391" width="4" height="4"/><rect x="1732.4" y="396.2" width="4" height="4"/><rect x="1732.4" y="401.4" width="4" height="4"/></g>
<rect x="1534.9" y="421.8" width="13.200" height="13.200" fill="#ffffff"/>
<rect x="1549.0" y="421.8" width="13.200" height="13.200" fill="#231815"/>
<rect x="1563.0" y="421.8" width="13.200" height="13.200" fill="#e60012"/>
<rect x="1577.0" y="421.8" width="13.200" height="13.200" fill="#fff100"/>
<rect x="1591.0" y="421.8" width="13.200" height="13.200" fill="#009944"/>
<rect x="1605.0" y="421.8" width="13.200" height="13.200" fill="#00a0e9"/>
<rect x="1619.1" y="421.8" width="13.200" height="13.200" fill="#1d2088"/>
<rect x="1633.1" y="421.8" width="13.200" height="13.200" fill="#e4007f"/>
<rect x="1647.1" y="421.8" width="13.200" height="13.200" fill="#d7182a"/>
<rect x="1661.1" y="421.8" width="13.200" height="13.200" fill="#e8442a"/>
<rect x="1675.1" y="421.8" width="13.200" height="13.200" fill="#f0661e"/>
<rect x="1689.2" y="421.8" width="13.200" height="13.200" fill="#f39a10"/>
<rect x="1703.2" y="421.8" width="13.200" height="13.200" fill="#f8b62d"/>
<rect x="1506.9" y="435.8" width="13.200" height="13.200" fill="#ffee00"/>
<rect x="1520.9" y="435.8" width="13.200" height="13.200" fill="#dcdc20"/>
<rect x="1534.9" y="435.8" width="13.200" height="13.200" fill="#8fc31f"/>
<rect x="1549.0" y="435.8" width="13.200" height="13.200" fill="#22ac38"/>
<rect x="1563.0" y="435.8" width="13.200" height="13.200" fill="#009944"/>
<rect x="1577.0" y="435.8" width="13.200" height="13.200" fill="#00843d"/>
<rect x="1591.0" y="435.8" width="13.200" height="13.200" fill="#13ae67"/>
<rect x="1605.0" y="435.8" width="13.200" height="13.200" fill="#00a29a"/>
<rect x="1619.1" y="435.8" width="13.200" height="13.200" fill="#2ea7e0"/>
<rect x="1633.1" y="435.8" width="13.200" height="13.200" fill="#0476c0"/>
<rect x="1647.1" y="435.8" width="13.200" height="13.200" fill="#1a2f96"/>
<rect x="1661.1" y="435.8" width="13.200" height="13.200" fill="#1b1f7e"/>
<rect x="1675.1" y="435.8" width="13.200" height="13.200" fill="#601986"/>
<rect x="1689.2" y="435.8" width="13.200" height="13.200" fill="#920783"/>
<rect x="1703.2" y="435.8" width="13.200" height="13.200" fill="#b0095e"/>
<rect x="1506.9" y="449.9" width="13.200" height="13.200" fill="#d6005a"/>
<rect x="1520.9" y="449.9" width="13.200" height="13.200" fill="#e5006e"/>
<rect x="1534.9" y="449.9" width="13.200" height="13.200" fill="#c8b89a"/>
<rect x="1549.0" y="449.9" width="13.200" height="13.200" fill="#a68a74"/>
<rect x="1563.0" y="449.9" width="13.200" height="13.200" fill="#876a56"/>
<rect x="1577.0" y="449.9" width="13.200" height="13.200" fill="#70503e"/>
<rect x="1591.0" y="449.9" width="13.200" height="13.200" fill="#c69c6d"/>
<rect x="1605.0" y="449.9" width="13.200" height="13.200" fill="#b47e4a"/>
<rect x="1619.1" y="449.9" width="13.200" height="13.200" fill="#9e652e"/>
<rect x="1633.1" y="449.9" width="13.200" height="13.200" fill="#8b5322"/>
<rect x="1647.1" y="449.9" width="13.200" height="13.200" fill="#783c08"/>
<rect x="1661.1" y="449.9" width="13.200" height="13.200" fill="#4b2a12"/>
<rect x="1675.1" y="449.9" width="13.200" height="13.200" fill="url(#gwb)"/>
<rect x="1689.2" y="449.9" width="13.200" height="13.200" fill="url(#gyo)"/>
<rect x="1703.2" y="449.9" width="13.200" height="13.200" fill="url(#gbl)"/>
<rect x="1506.9" y="463.9" width="13.200" height="13.200" fill="url(#gpt)"/>
<rect x="1520.9" y="463.9" width="13.200" height="13.200" fill="#7fbf3f"/>
<rect x="1534.9" y="463.9" width="13.200" height="13.200" fill="#c2a078"/>
<use href="#fold" x="1507.9" y="481"/>
<rect x="1520.9" y="480.0" width="13.200" height="13.200" fill="#231815"/>
<rect x="1534.9" y="480.0" width="13.200" height="13.200" fill="#3e3a39"/>
<rect x="1549.0" y="480.0" width="13.200" height="13.200" fill="#595757"/>
<rect x="1563.0" y="480.0" width="13.200" height="13.200" fill="#727171"/>
<rect x="1577.0" y="480.0" width="13.200" height="13.200" fill="#898989"/>
<rect x="1591.0" y="480.0" width="13.200" height="13.200" fill="#9fa0a0"/>
<rect x="1605.0" y="480.0" width="13.200" height="13.200" fill="#b5b5b6"/>
<rect x="1619.1" y="480.0" width="13.200" height="13.200" fill="#c9caca"/>
<rect x="1633.1" y="480.0" width="13.200" height="13.200" fill="#dcdddd"/>
<rect x="1647.1" y="480.0" width="13.200" height="13.200" fill="#efefef"/>
<rect x="1661.1" y="480.0" width="13.200" height="13.200" fill="#fbfbfb"/>
<use href="#fold" x="1507.9" y="497"/>
<rect x="1520.9" y="496.0" width="13.200" height="13.200" fill="#e60012"/>
<rect x="1534.9" y="496.0" width="13.200" height="13.200" fill="#f26c0a"/>
<rect x="1549.0" y="496.0" width="13.200" height="13.200" fill="#ffe100"/>
<rect x="1563.0" y="496.0" width="13.200" height="13.200" fill="#00a040"/>
<rect x="1577.0" y="496.0" width="13.200" height="13.200" fill="#0b3ea6"/>
<rect x="1591.0" y="496.0" width="13.200" height="13.200" fill="#8f2aa8"/>
<rect x="1506.900" y="421.800" width="13.200" height="13.200" fill="#fff"/><path d="M1507.500 434.500L1519.500 422.500" stroke="#d8101c" stroke-width="1.600"/>
<rect x="1520.900" y="421.800" width="13.200" height="13.200" fill="#fff"/><g fill="none" stroke="#555" stroke-width=".9"><circle cx="1527.500" cy="428.400" r="4"/><circle cx="1527.500" cy="428.400" r="1.300"/><path d="M1521.500 428.400h12M1527.500 422.400v12"/></g>
<g fill="#fff" opacity=".9"><circle cx="1511.500" cy="468.500" r="1.600"/><circle cx="1515.500" cy="468.500" r="1.600"/><circle cx="1511.500" cy="472.500" r="1.600"/><circle cx="1515.500" cy="472.500" r="1.600"/></g>
<rect x="1524" y="463.900" width="7" height="3" fill="#f4f8ea"/><rect x="1524.500" y="474" width="6" height="3" fill="#f4f8ea"/><rect x="1523" y="467" width="3" height="6" fill="#b6dc6a"/><rect x="1530" y="467" width="3" height="6" fill="#5ea82e"/>
<g fill="#e8d2b4"><circle cx="1538" cy="467" r="1.600"/><circle cx="1544" cy="466.500" r="1.600"/><circle cx="1541" cy="471" r="1.800"/><circle cx="1546" cy="474" r="1.600"/><circle cx="1537.500" cy="474.500" r="1.500"/></g>
<g fill="#fff" opacity=".55"><rect x="1703.2" y="449.9" width="2.200" height="2.200"/><rect x="1703.2" y="454.3" width="2.200" height="2.200"/><rect x="1703.2" y="458.7" width="2.200" height="2.200"/><rect x="1705.4" y="452.1" width="2.200" height="2.200"/><rect x="1705.4" y="456.5" width="2.200" height="2.200"/><rect x="1705.4" y="460.9" width="2.200" height="2.200"/><rect x="1707.6" y="449.9" width="2.200" height="2.200"/><rect x="1707.6" y="454.3" width="2.200" height="2.200"/><rect x="1707.6" y="458.7" width="2.200" height="2.200"/><rect x="1709.8" y="452.1" width="2.200" height="2.200"/><rect x="1709.8" y="456.5" width="2.200" height="2.200"/><rect x="1709.8" y="460.9" width="2.200" height="2.200"/><rect x="1712" y="449.9" width="2.200" height="2.200"/><rect x="1712" y="454.3" width="2.200" height="2.200"/><rect x="1712" y="458.7" width="2.200" height="2.200"/><rect x="1714.2" y="452.1" width="2.200" height="2.200"/><rect x="1714.2" y="456.5" width="2.200" height="2.200"/><rect x="1714.2" y="460.9" width="2.200" height="2.200"/></g>
<g fill="#d6d6d6"><rect x="1512" y="607" width="2" height="10"/><rect x="1515.500" y="607" width="2" height="10"/><path d="M1519 607.500l1.800-.7l3.700 9.700l-1.800.7z"/><path d="M1524.500 617h3l-1.500 1.500z"/><rect x="1602" y="607" width="3" height="3"/><rect x="1606" y="607" width="3" height="3"/><rect x="1610" y="607" width="3" height="3"/><rect x="1602" y="611" width="3" height="3"/><rect x="1606" y="611" width="3" height="3"/><rect x="1610" y="611" width="3" height="3"/><rect x="1602" y="615" width="3" height="3"/><rect x="1606" y="615" width="3" height="3"/><path d="M1614 617h3l-1.500 1.500z"/></g>
<g fill="none" stroke="#d6d6d6" stroke-width="1.200"><circle cx="1543.500" cy="612.500" r="2.800"/><path d="M1545.500 610.500l2.500-2.500M1545.500 614.500l2.500 2.500"/></g><circle cx="1548.500" cy="607.500" r="1.500" fill="#d6d6d6"/><circle cx="1548.500" cy="617.500" r="1.500" fill="#d6d6d6"/>
<path d="M1562 616.500h17a3.500 3.500 0 0 0-1-6.500a5 5 0 0 0-9.500-1.500a4 4 0 0 0-4.500 4.500q-2 1-2 3.500z" fill="#6a6a6a"/>
<g fill="none" stroke="#6c6c6c" stroke-width="1"><rect x="1629.500" y="607.500" width="10" height="10"/><path d="M1632 610.500h5.500M1632 612.500h5.500M1632 614.500h5.500"/><path d="M1709.500 608.500h9M1710.500 609v8.500h7V609M1712.500 607h3M1713 610v6M1715.500 610v6"/></g>
<path d="M1682.500 607h10v10.500h-6l-4-4z" fill="#6c6c6c"/>
<path d="M1653.500 607h5v1.500h-5z" fill="#e6e6e6"/><rect x="1653.500" y="608.500" width="14" height="9" fill="#e0e0e0"/>
</svg>
<div class="t" style="left:1517.5px;top:397px;font-size:6px;font-weight:bold;color:#e0e0e0">?</div>
<div class="t" style="left:1530px;top:397px;font-size:6px;font-weight:bold;color:#e0e0e0">?</div>
<div class="t" style="left:1517.5px;top:409px;font-size:6px;font-weight:bold;color:#e0e0e0">?</div>
<div class="t" style="left:1530px;top:409px;font-size:6px;font-weight:bold;color:#e0e0e0">?</div>
<div class="a" style="left:1501px;top:622px;width:245px;height:3px;background:#3f3f3f"></div>
<div class="a" style="left:1501px;top:625px;width:245px;height:27px;background:#434343;border-bottom:1px solid #3d3d3d"></div>
<div class="a" style="left:1501px;top:625px;width:47px;height:27px;background:#535353;border-right:1px solid #3d3d3d"></div>
<div class="t" style="left:1517px;top:634px;font-size:12px;color:#f2f2f2">颜色</div>
<div class="a" style="left:1548px;top:625px;width:54px;height:26px;background:#4a4a4a;border-right:1px solid #3d3d3d"></div>
<div class="t" style="left:1558.5px;top:634px;font-size:12px;color:#b8b8b8">透明度</div>
<div class="a" style="left:1602px;top:625px;width:43px;height:26px;background:#4a4a4a;border-right:1px solid #3d3d3d"></div>
<div class="t" style="left:1612px;top:634px;font-size:12px;color:#b8b8b8">渐变</div>
<svg style="left:1730px;top:634.5px" width="11" height="8"><use href="#mn"/></svg>
<svg style="left:1505px;top:632.5px" width="8" height="12"><use href="#ud"/></svg>
<svg style="left:0;top:0" width="1751" height="959" viewBox="0 0 1751 959">
<rect x="1510.500" y="661.500" width="7" height="7" fill="#1a1a1a" stroke="#d2d2d2" stroke-width="1"/><rect x="1507.500" y="658.500" width="7" height="7" fill="#fff" stroke="#1a1a1a" stroke-width="1"/>
<g fill="none" stroke="#6a6a6a" stroke-width="1.200"><path d="M1529 663h5v4M1532 671h5"/></g>
<use href="#fs" x="1506.500" y="677"/>
<rect x="1570" y="670" width="103" height="2" fill="#5b5b5b"/>
<rect x="1570" y="703" width="103" height="2" fill="#5b5b5b"/>
<rect x="1570" y="736" width="103" height="2" fill="#5b5b5b"/>
<rect x="1681.500" y="660.5" width="35" height="19" rx="3" fill="#464646" stroke="#5c5c5c"/>
<rect x="1681.500" y="693.5" width="35" height="19" rx="3" fill="#464646" stroke="#5c5c5c"/>
<rect x="1681.500" y="726.5" width="35" height="19" rx="3" fill="#464646" stroke="#5c5c5c"/>
<rect x="1685.500" y="763.500" width="44" height="19" rx="3" fill="#464646" stroke="#5c5c5c"/>
<path d="M1514 754h6v-2h-3v-3.500h2l-3.500-3.500l-3.500 3.500h2v5.500z" fill="#d6d6d6"/>
<rect x="1530.500" y="744" width="13.500" height="13" fill="#58dc5a" stroke="#d0d0d0" stroke-width="1"/>
<rect x="1506.500" y="766.500" width="13" height="13" fill="#fff"/><path d="M1507 779L1519 767" stroke="#d8101c" stroke-width="1.600"/><rect x="1519.500" y="766.500" width="13" height="13" fill="#000"/><rect x="1532.500" y="766.500" width="13" height="13" fill="#fff"/>
<rect x="1507.500" y="790.500" width="221" height="94.500" fill="url(#hue)"/><rect x="1507.500" y="790.500" width="221" height="94.500" fill="url(#wht)"/><rect x="1507.500" y="790.500" width="221" height="94.500" fill="url(#blk)"/>
</svg>
<div class="t" style="left:1517.5px;top:687.5px;font-size:6px;font-weight:bold;color:#e0e0e0">?</div>
<div class="t" style="left:1530px;top:687.5px;font-size:6px;font-weight:bold;color:#e0e0e0">?</div>
<div class="t" style="left:1517.5px;top:699.5px;font-size:6px;font-weight:bold;color:#e0e0e0">?</div>
<div class="t" style="left:1530px;top:699.5px;font-size:6px;font-weight:bold;color:#e0e0e0">?</div>
<div class="t rgb" style="left:1553px;top:665px">R</div>
<div class="t rgb" style="left:1553px;top:698px">G</div>
<div class="t rgb" style="left:1553px;top:731px">B</div>
<div class="t rgb" style="left:1675px;top:768px">#</div>
<style>.rgb{font-size:12px;color:#cfcfcf;font-family:"Liberation Serif",serif}</style>
<div class="a" style="left:1501px;top:891px;width:245px;height:3px;background:#3f3f3f"></div>
<div class="a" style="left:1501px;top:894px;width:245px;height:27px;background:#434343;border-bottom:1px solid #3d3d3d"></div>
<div class="a" style="left:1501px;top:894px;width:47px;height:27px;background:#535353;border-right:1px solid #3d3d3d"></div>
<div class="t" style="left:1517px;top:903px;font-size:12px;color:#f2f2f2">变换</div>
<svg style="left:1730px;top:903.5px" width="11" height="8"><use href="#mn"/></svg>
<svg style="left:1505px;top:901.5px" width="8" height="12"><use href="#ud"/></svg>
<div class="a" style="left:1501px;top:922px;width:245px;height:3px;background:#3f3f3f"></div>
<div class="a" style="left:1501px;top:925px;width:245px;height:29px;background:#434343;border-bottom:1px solid #3d3d3d"></div>
<div class="a" style="left:1501px;top:925px;width:47px;height:29px;background:#535353;border-right:1px solid #3d3d3d"></div>
<div class="t" style="left:1517px;top:935px;font-size:12px;color:#f2f2f2">字符</div>
<div class="a" style="left:1548px;top:925px;width:43px;height:28px;background:#4a4a4a;border-right:1px solid #3d3d3d"></div>
<div class="t" style="left:1558.5px;top:935px;font-size:12px;color:#b8b8b8">段落</div>
<div class="a" style="left:1591px;top:925px;width:79px;height:28px;background:#4a4a4a;border-right:1px solid #3d3d3d"></div>
<div class="t" style="left:1601px;top:935px;font-size:12px;color:#b8b8b8"><span style="letter-spacing:.6px">OpenType</span></div>
<svg style="left:1730px;top:935.5px" width="11" height="8"><use href="#mn"/></svg>
<svg style="left:1505px;top:933.5px" width="8" height="12"><use href="#ud"/></svg>
<!-- ===== watermark ===== -->
<svg style="left:1488px;top:848px" width="72" height="62" viewBox="0 0 72 62">
<path d="M25.500 2.500C12.500 2.500 2 11 2 21.500c0 6 3.400 11.300 8.600 14.800L8 45l9.800-5.200c2.400.7 5 1 7.700 1c13 0 23.500-8.500 23.500-19.300S38.500 2.500 25.500 2.500z" fill="#f1ebea"/>
<circle cx="17" cy="17" r="3" fill="#5a4a46"/><circle cx="35" cy="17" r="3" fill="#6a3a28"/>
<path d="M47.500 20.500c-11.500 0-20.500 7.600-20.500 17s9 17 20.500 17c2.300 0 4.500-.3 6.500-.9l8.200 4.400l-2.300-7c4.900-3.100 8.100-8 8.100-13.500c0-9.400-9-17-20.500-17z" fill="#f3f1f0" stroke="#2e2a2a" stroke-width="1.300"/>
<circle cx="40.500" cy="32.500" r="2.700" fill="#2a2624"/><circle cx="55.500" cy="32.500" r="2.700" fill="#2a2624"/>
</svg>
<div class="t" style="left:1564px;top:856.500px;font-size:42.500px;font-weight:400;-webkit-text-stroke:.35px #fff;letter-spacing:1.300px;color:#fff;font-family:'Liberation Sans','Noto Sans CJK SC',sans-serif;text-shadow:0 0 2px rgba(0,0,0,.3)">野鹿志</div>

</body>
</html>
